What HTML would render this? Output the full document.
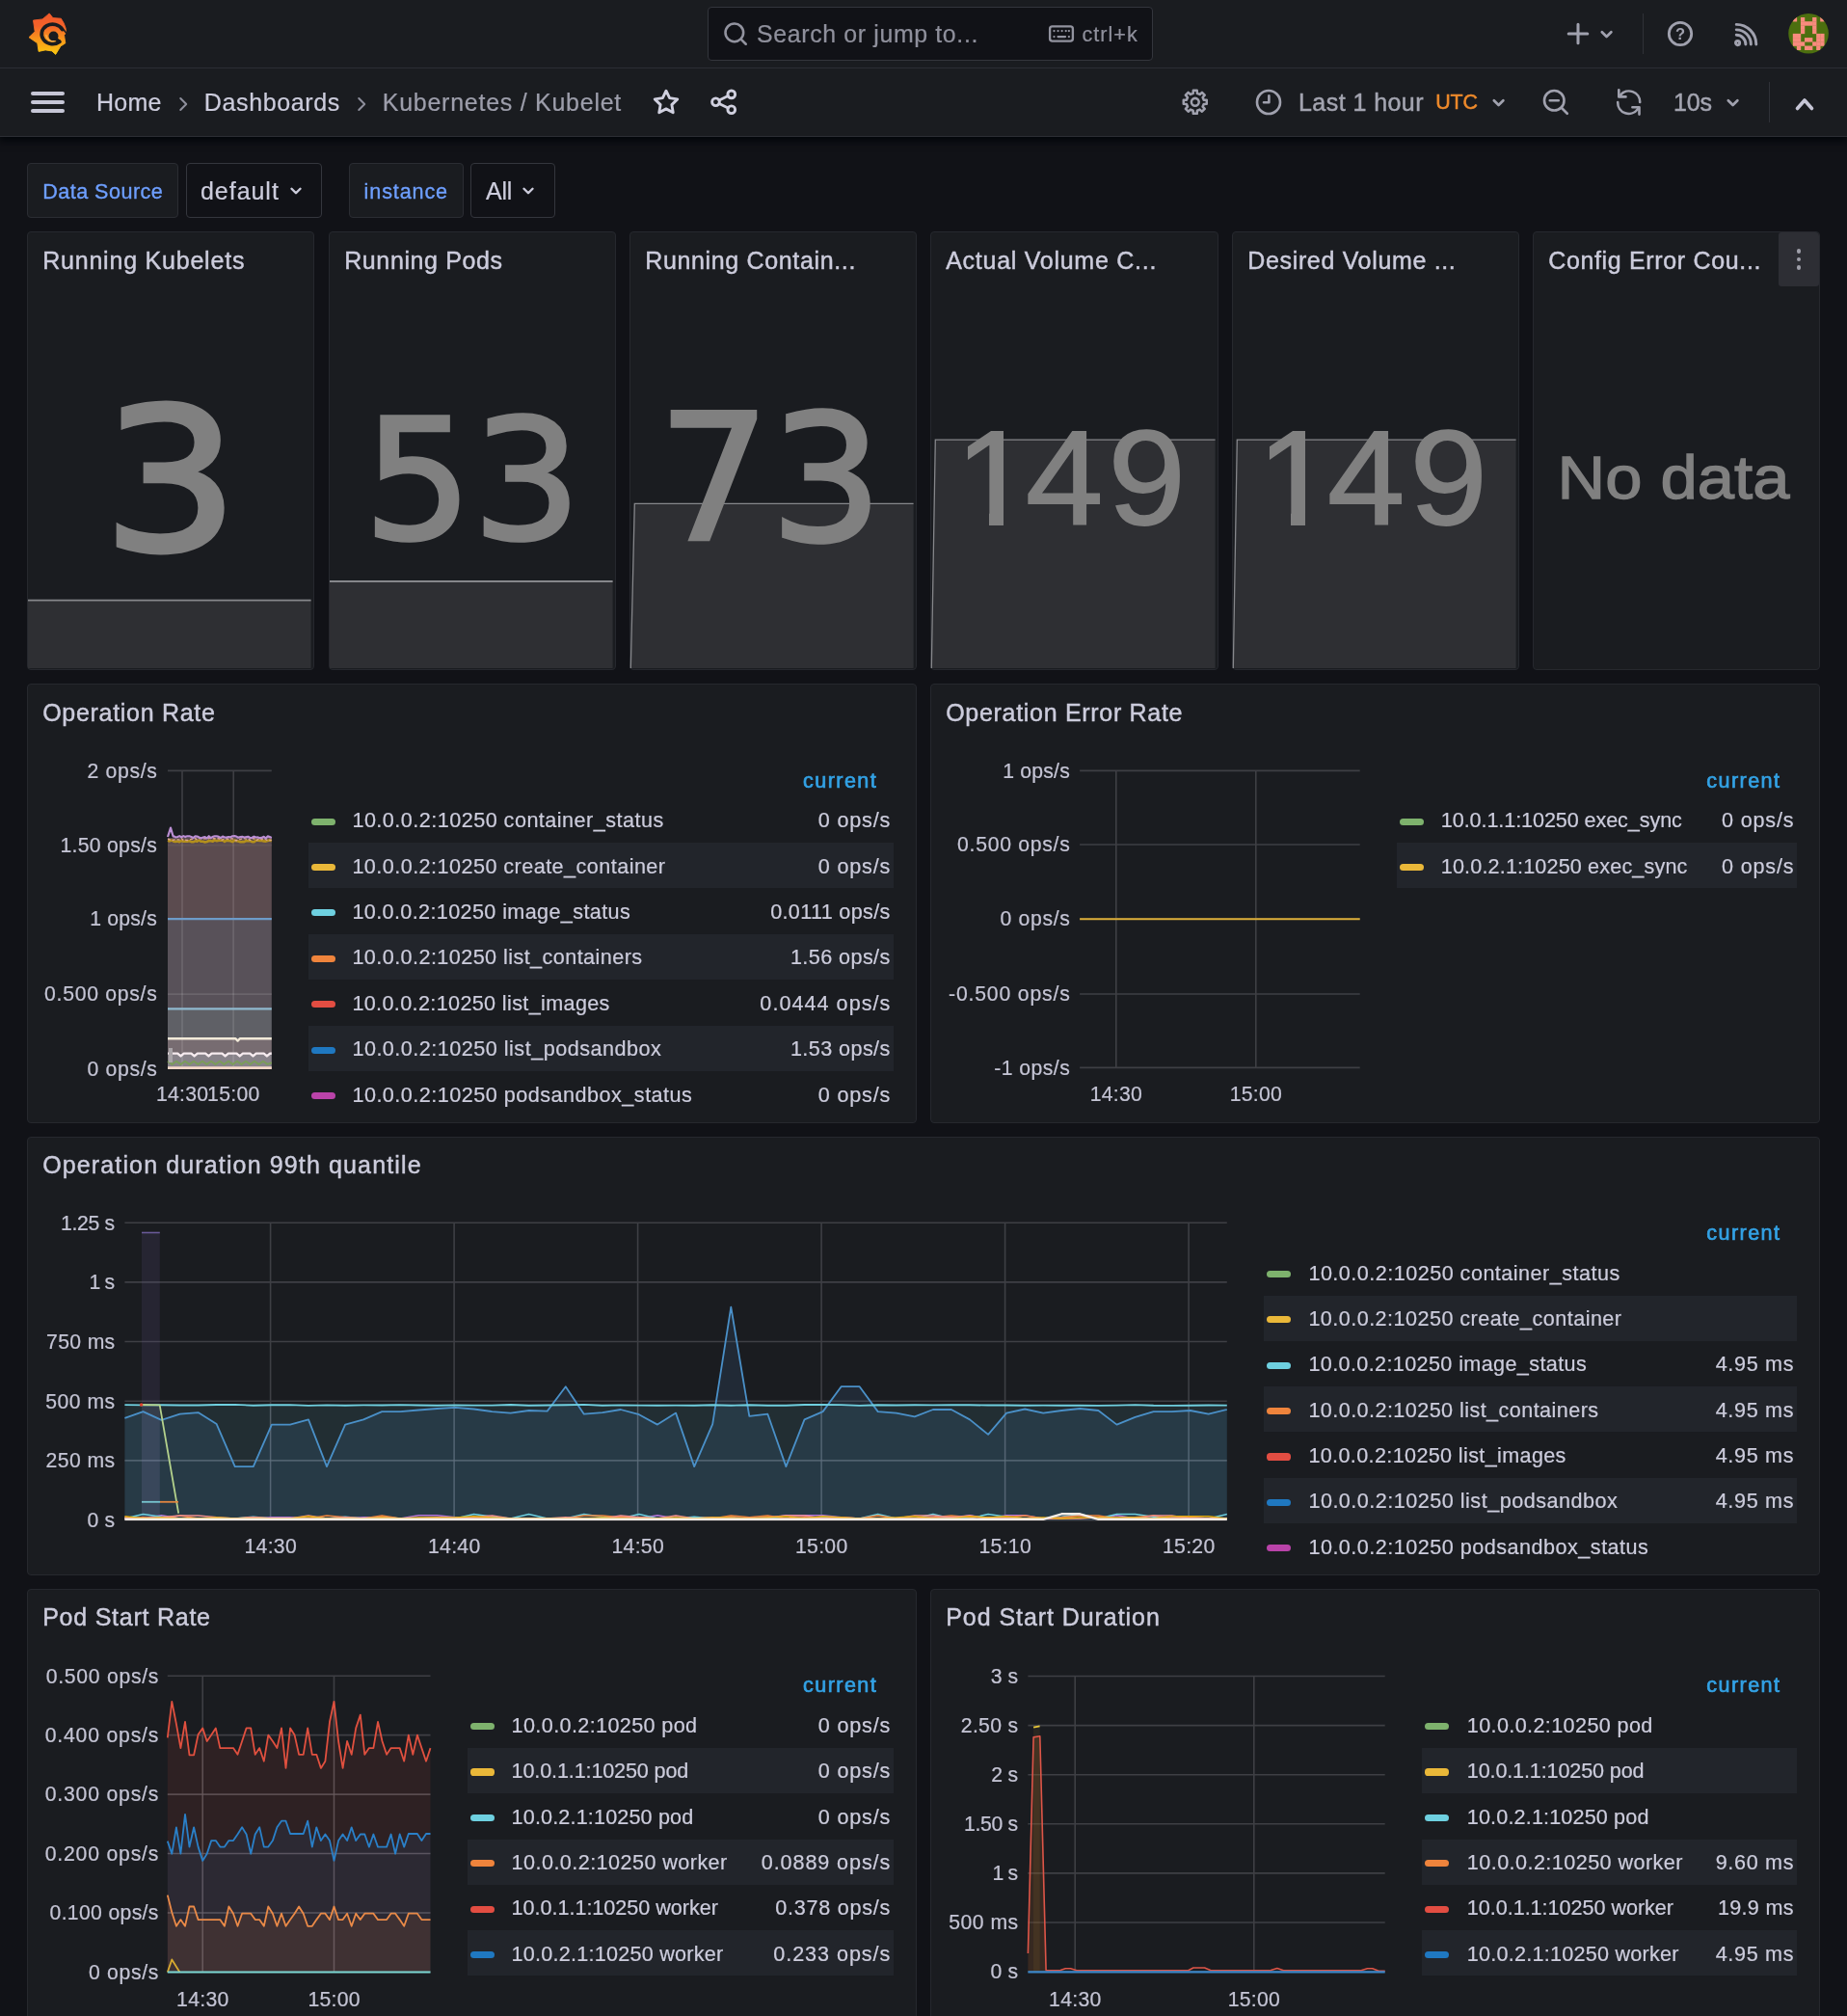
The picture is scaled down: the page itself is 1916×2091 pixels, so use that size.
<!DOCTYPE html>
<html lang="en"><head><meta charset="utf-8"><title>Kubernetes / Kubelet - Dashboards - Grafana</title>
<style>
html,body{margin:0;padding:0;background:#111217;overflow:hidden;}
html{width:1916px;height:2091px;}
body{width:1916px;height:2091px;position:relative;overflow:hidden;font-family:"Liberation Sans", sans-serif;}
#root{position:absolute;left:0;top:0;width:1916px;height:2091px;will-change:transform;overflow:hidden;}
.b{position:absolute;box-sizing:border-box;display:block;}
.t{position:absolute;white-space:pre;line-height:1;font-family:"Liberation Sans", sans-serif;}
svg text{font-family:"Liberation Sans", sans-serif;}
.v149::first-letter{letter-spacing:-7px;}
</style></head>
<body>
<div id="root">
<div class="b" style="left:0.0px;top:0.0px;width:1916.0px;height:142.0px;background:#1a1c20;box-shadow:0 3px 8px 1px rgba(1,4,9,0.92);"></div>
<div class="b" style="left:0.0px;top:70.0px;width:1916.0px;height:1.0px;background:#2c2e34;"></div>
<div class="b" style="left:0.0px;top:141.0px;width:1916.0px;height:1.0px;background:#2c2e34;"></div>
<svg class="b" style="left:20px;top:5px" width="60" height="60" viewBox="20 5 60 60"><defs><linearGradient id="lg" gradientUnits="userSpaceOnUse" x1="0" y1="14" x2="0" y2="57"><stop offset="0" stop-color="#f1592a"/><stop offset="0.3" stop-color="#f3622a"/><stop offset="0.6" stop-color="#f8931c"/><stop offset="1" stop-color="#fbca0f"/></linearGradient></defs><path d="M51.2,13.9 L54.9,18.6 L63.3,19.2 L66.2,24.1 L68.0,28.9 L68.6,33.9 L66.5,36.4 L67.8,44.8 L62.9,47.9 L57.7,56.4 L53.8,52.9 L47.1,51.9 L40.1,53.4 L38.8,44.8 L30.0,38.7 L36.2,32.7 L34.5,21.1 L44.1,19.9Z" fill="url(#lg)" stroke="url(#lg)" stroke-width="0.9" stroke-linejoin="round"/><path d="M64.67,30.56 A11.4,10.3 0 1 0 61.93,43.29" fill="none" stroke="#1a1c20" stroke-width="3.7" stroke-linecap="round"/><path d="M63.07,28.51 Q66.65,31.00 68.66,34.06" fill="none" stroke="#1a1c20" stroke-width="1.7" stroke-linecap="round"/><circle cx="55.5" cy="37.5" r="5.0" fill="#1a1c20"/><path d="M57.8,40.2 L61.2,42.8" stroke="#1a1c20" stroke-width="3.4" stroke-linecap="round"/><path d="M47.9,36.4 A6.9,6.6 0 0 0 56.2,42.6" fill="none" stroke="#f7b35a" stroke-width="1.1" stroke-linecap="round"/></svg>
<div class="b" style="left:734.0px;top:7.0px;width:462.0px;height:56.0px;background:#111217;border:1px solid #33353c;border-radius:4px;"></div>
<svg class="b" style="left:749.0px;top:21.0px" width="28" height="28" viewBox="0 0 24 24" fill="none" stroke="#92939f" stroke-width="2.2" stroke-linecap="round" stroke-linejoin="round"><circle cx="11" cy="11" r="8"/><path d="M17 17l4.2 4.2"/></svg>
<span class="t" id="t1" style="top:23.04px;font-size:24.9px;color:#8f909c;letter-spacing:0.640px;-webkit-text-stroke:0.22px #8f909c;left:785.00px;">Search or jump to...</span>
<svg class="b" style="left:1087.0px;top:21.0px" width="28" height="28" viewBox="0 0 24 24" fill="none" stroke="#92939f" stroke-width="2.0" stroke-linecap="round" stroke-linejoin="round"><rect x="1.8" y="5.5" width="20.4" height="13" rx="2.2"/><path d="M5.5 9.5h.1M9 9.5h.1M12.5 9.5h.1M16 9.5h.1M18.7 9.5h.1M5.5 14.6h.1M18.7 14.6h.1M9 14.6h6.5" stroke-width="1.9"/></svg>
<span class="t" id="t2" style="top:24.84px;font-size:21.6px;color:#8f909c;letter-spacing:1.049px;-webkit-text-stroke:0.22px #8f909c;left:1122.40px;">ctrl+k</span>
<svg class="b" style="left:1622.6px;top:21.2px" width="28" height="28" viewBox="0 0 24 24" fill="none" stroke="#a0a1ae" stroke-width="2.6" stroke-linecap="round" stroke-linejoin="round"><path d="M12 3.6v16.8M3.6 12h16.8"/></svg>
<svg class="b" style="left:1657.4px;top:26.2px" width="19.2" height="19.2" viewBox="-9.6 -9.6 19.2 19.2" fill="none" stroke="#a0a1ae" stroke-width="2.7" stroke-linecap="round" stroke-linejoin="round"><polyline points="-4.8,-2.4 0,2.4 4.8,-2.4"/></svg>
<div class="b" style="left:1704.0px;top:14.0px;width:1.0px;height:42.0px;background:#2f3137;"></div>
<svg class="b" style="left:1729px;top:21px" width="28" height="28" viewBox="0 0 28 28" fill="none" stroke="#a0a1ae" stroke-width="2.8"><circle cx="14" cy="14" r="11.7"/><text x="14" y="19.7" text-anchor="middle" font-size="16.5" font-weight="700" fill="#a0a1ae" stroke="none">?</text></svg>
<svg class="b" style="left:1798.2px;top:22.7px" width="26.2" height="26.2" viewBox="0 0 24 24" fill="none" stroke="#a0a1ae" stroke-width="2.7" stroke-linecap="round" stroke-linejoin="round"><circle cx="4.2" cy="19.8" r="1.9"/><path d="M3 12.2a8.8 8.8 0 0 1 8.8 8.8M3 7.2a13.8 13.8 0 0 1 13.8 13.8M3 2.2a18.8 18.8 0 0 1 18.8 18.8"/></svg>
<svg class="b" style="left:1850px;top:10px" width="54" height="52" viewBox="1850 10 54 52"><defs><clipPath id="av"><circle cx="1876.05" cy="34.7" r="20.8"/></clipPath></defs><g clip-path="url(#av)"><rect x="1850" y="10" width="54" height="52" fill="#4c6f0f"/><g fill="#f98b7e"><rect x="1859.81" y="18.00" width="4.31" height="4.47"/><rect x="1867.93" y="18.00" width="4.31" height="4.47"/><rect x="1880.11" y="18.00" width="4.31" height="4.47"/><rect x="1888.23" y="18.00" width="4.31" height="4.47"/><rect x="1867.93" y="22.22" width="4.31" height="4.47"/><rect x="1871.99" y="22.22" width="4.31" height="4.47"/><rect x="1876.05" y="22.22" width="4.31" height="4.47"/><rect x="1880.11" y="22.22" width="4.31" height="4.47"/><rect x="1867.93" y="26.44" width="4.31" height="4.47"/><rect x="1880.11" y="26.44" width="4.31" height="4.47"/><rect x="1867.93" y="30.66" width="4.31" height="4.47"/><rect x="1880.11" y="30.66" width="4.31" height="4.47"/><rect x="1859.81" y="34.88" width="4.31" height="4.47"/><rect x="1863.87" y="34.88" width="4.31" height="4.47"/><rect x="1884.17" y="34.88" width="4.31" height="4.47"/><rect x="1888.23" y="34.88" width="4.31" height="4.47"/><rect x="1859.81" y="39.10" width="4.31" height="4.47"/><rect x="1863.87" y="39.10" width="4.31" height="4.47"/><rect x="1871.99" y="39.10" width="4.31" height="4.47"/><rect x="1876.05" y="39.10" width="4.31" height="4.47"/><rect x="1884.17" y="39.10" width="4.31" height="4.47"/><rect x="1888.23" y="39.10" width="4.31" height="4.47"/><rect x="1859.81" y="43.32" width="4.31" height="4.47"/><rect x="1863.87" y="43.32" width="4.31" height="4.47"/><rect x="1867.93" y="43.32" width="4.31" height="4.47"/><rect x="1880.11" y="43.32" width="4.31" height="4.47"/><rect x="1884.17" y="43.32" width="4.31" height="4.47"/><rect x="1888.23" y="43.32" width="4.31" height="4.47"/><rect x="1863.87" y="47.54" width="4.31" height="4.47"/><rect x="1871.99" y="47.54" width="4.31" height="4.47"/><rect x="1876.05" y="47.54" width="4.31" height="4.47"/><rect x="1884.17" y="47.54" width="4.31" height="4.47"/></g></g></svg>
<div class="b" style="left:32.0px;top:95.3px;width:35.0px;height:4.0px;background:#c6c6d6;border-radius:2px;"></div>
<div class="b" style="left:32.0px;top:104.0px;width:35.0px;height:4.0px;background:#c6c6d6;border-radius:2px;"></div>
<div class="b" style="left:32.0px;top:112.7px;width:35.0px;height:4.0px;background:#c6c6d6;border-radius:2px;"></div>
<span class="t" id="t3" style="top:93.96px;font-size:25px;color:#ccccdc;letter-spacing:0.228px;-webkit-text-stroke:0.22px #ccccdc;left:100.00px;">Home</span>
<svg class="b" style="left:179.0px;top:96.6px" width="22" height="22" viewBox="0 0 24 24" fill="none" stroke="#8e8f9c" stroke-width="2.2" stroke-linecap="round" stroke-linejoin="round"><path d="M9 5.5l6.5 6.5L9 18.5"/></svg>
<span class="t" id="t4" style="top:93.96px;font-size:25px;color:#ccccdc;letter-spacing:0.629px;-webkit-text-stroke:0.22px #ccccdc;left:211.80px;">Dashboards</span>
<svg class="b" style="left:364.0px;top:96.6px" width="22" height="22" viewBox="0 0 24 24" fill="none" stroke="#8e8f9c" stroke-width="2.2" stroke-linecap="round" stroke-linejoin="round"><path d="M9 5.5l6.5 6.5L9 18.5"/></svg>
<span class="t" id="t5" style="top:93.96px;font-size:25px;color:#9d9eab;letter-spacing:0.735px;-webkit-text-stroke:0.22px #9d9eab;left:396.80px;">Kubernetes / Kubelet</span>
<svg class="b" style="left:676.0px;top:91.0px" width="30" height="30" viewBox="0 0 24 24" fill="none" stroke="#d0d0df" stroke-width="2.3" stroke-linecap="round" stroke-linejoin="round"><path d="M12 2.6l2.9 5.95 6.5.95-4.7 4.6 1.1 6.5L12 17.5l-5.8 3.1 1.1-6.5-4.7-4.6 6.5-.95z"/></svg>
<svg class="b" style="left:736.0px;top:91.0px" width="30" height="30" viewBox="0 0 24 24" fill="none" stroke="#d0d0df" stroke-width="2.3" stroke-linecap="round" stroke-linejoin="round"><circle cx="18.2" cy="5.5" r="3.1"/><circle cx="5.2" cy="11.8" r="3.1"/><circle cx="18.2" cy="18.2" r="3.1"/><path d="M8 10.4l7.4-3.6M8 13.2l7.4 3.6"/></svg>
<svg class="b" style="left:1225.9px;top:92.1px" width="27.6" height="27.6" viewBox="0 0 24 24" fill="none" stroke="#a0a1ae" stroke-width="2.2" stroke-linecap="round" stroke-linejoin="round"><path d="M22.46,10.31 L22.46,13.69 L19.78,13.86 L18.82,16.18 L20.59,18.21 L18.21,20.59 L16.18,18.82 L13.86,19.78 L13.69,22.46 L10.31,22.46 L10.14,19.78 L7.82,18.82 L5.79,20.59 L3.41,18.21 L5.18,16.18 L4.22,13.86 L1.54,13.69 L1.54,10.31 L4.22,10.14 L5.18,7.82 L3.41,5.79 L5.79,3.41 L7.82,5.18 L10.14,4.22 L10.31,1.54 L13.69,1.54 L13.86,4.22 L16.18,5.18 L18.21,3.41 L20.59,5.79 L18.82,7.82 L19.78,10.14Z"/><circle cx="12" cy="12" r="3.4"/></svg>
<svg class="b" style="left:1301.0px;top:91.0px" width="30" height="30" viewBox="0 0 24 24" fill="none" stroke="#a0a1ae" stroke-width="2.1" stroke-linecap="round" stroke-linejoin="round"><circle cx="12" cy="12" r="9.6"/><path d="M12.3 6.6v5.6H8"/></svg>
<span class="t" id="t6" style="top:93.96px;font-size:25px;color:#a4a5b1;letter-spacing:0.446px;-webkit-text-stroke:0.45px #a4a5b1;left:1347.00px;">Last 1 hour</span>
<span class="t" id="t7" style="top:96.00px;font-size:21.4px;color:#ee8a2b;letter-spacing:-0.190px;-webkit-text-stroke:0.5px #ee8a2b;left:1489.30px;">UTC</span>
<svg class="b" style="left:1545.4px;top:97.0px" width="19.2" height="19.2" viewBox="-9.6 -9.6 19.2 19.2" fill="none" stroke="#a0a1ae" stroke-width="2.7" stroke-linecap="round" stroke-linejoin="round"><polyline points="-4.8,-2.4 0,2.4 4.8,-2.4"/></svg>
<svg class="b" style="left:1599.0px;top:91.0px" width="30" height="30" viewBox="0 0 24 24" fill="none" stroke="#a0a1ae" stroke-width="2.1" stroke-linecap="round" stroke-linejoin="round"><circle cx="10.6" cy="10.6" r="8.2"/><path d="M16.6 16.6l4.8 4.8M7 10.6h7.2"/></svg>
<svg class="b" style="left:1670px;top:86px" width="40" height="40" viewBox="1670 86 40 40" fill="none" stroke="#a0a1ae" stroke-width="2.6" stroke-linecap="round" stroke-linejoin="round"><path d="M1679.3,93.2 V100.4 H1686.5"/><path d="M1681.0,98.6 A11.4,11.4 0 0 1 1701.2,105.9"/><path d="M1700.5,118.6 V111.3 H1693.4"/><path d="M1678.2,106.1 A11.4,11.4 0 0 0 1698.8,113.2"/></svg>
<span class="t" id="t8" style="top:93.96px;font-size:25px;color:#a4a5b1;letter-spacing:-0.104px;-webkit-text-stroke:0.45px #a4a5b1;left:1736.00px;">10s</span>
<svg class="b" style="left:1788.4px;top:97.0px" width="19.2" height="19.2" viewBox="-9.6 -9.6 19.2 19.2" fill="none" stroke="#a0a1ae" stroke-width="2.7" stroke-linecap="round" stroke-linejoin="round"><polyline points="-4.8,-2.4 0,2.4 4.8,-2.4"/></svg>
<div class="b" style="left:1835.0px;top:85.0px;width:1.0px;height:42.0px;background:#2f3137;"></div>
<svg class="b" style="left:1858px;top:96px" width="28" height="24" viewBox="0 0 28 24" fill="none" stroke="#c6c6d6" stroke-width="3.6" stroke-linecap="round" stroke-linejoin="round"><polyline points="6.5,16.5 14,8 21.5,16.5"/></svg>
<div class="b" style="left:28.0px;top:169.0px;width:157.0px;height:57.0px;background:#1a1c20;border:1px solid #2b2d33;border-radius:4px;"></div>
<span class="t" id="t9" style="top:187.84px;font-size:21.6px;color:#6e9fff;letter-spacing:0.461px;-webkit-text-stroke:0.35px #6e9fff;left:44.20px;">Data Source</span>
<div class="b" style="left:193.0px;top:169.0px;width:141.0px;height:57.0px;background:#111217;border:1px solid #34363d;border-radius:4px;"></div>
<span class="t" id="t10" style="top:185.96px;font-size:25px;color:#ccccdc;letter-spacing:0.962px;-webkit-text-stroke:0.22px #ccccdc;left:208.00px;">default</span>
<svg class="b" style="left:297.6px;top:188.6px" width="18" height="18" viewBox="-9 -9 18 18" fill="none" stroke="#ccccdc" stroke-width="2.4" stroke-linecap="round" stroke-linejoin="round"><polyline points="-4.5,-2.25 0,2.25 4.5,-2.25"/></svg>
<div class="b" style="left:362.0px;top:169.0px;width:119.0px;height:57.0px;background:#1a1c20;border:1px solid #2b2d33;border-radius:4px;"></div>
<span class="t" id="t11" style="top:187.84px;font-size:21.6px;color:#6e9fff;letter-spacing:0.870px;-webkit-text-stroke:0.35px #6e9fff;left:377.60px;">instance</span>
<div class="b" style="left:488.0px;top:169.0px;width:88.0px;height:57.0px;background:#111217;border:1px solid #34363d;border-radius:4px;"></div>
<span class="t" id="t12" style="top:185.96px;font-size:25px;color:#ccccdc;letter-spacing:-0.266px;-webkit-text-stroke:0.22px #ccccdc;left:504.00px;">All</span>
<svg class="b" style="left:539.3px;top:188.6px" width="18" height="18" viewBox="-9 -9 18 18" fill="none" stroke="#ccccdc" stroke-width="2.4" stroke-linecap="round" stroke-linejoin="round"><polyline points="-4.5,-2.25 0,2.25 4.5,-2.25"/></svg>
<div class="b" style="left:28.0px;top:240.0px;width:298.0px;height:455.0px;background:#1a1c20;border:1px solid #26282e;border-radius:4px;"></div>
<svg class="b" style="left:28.0px;top:240.0px;" width="298" height="455" viewBox="0 0 298 455"><polygon points="1.0,382.6 294.6,382.6 294.6,453.0 1.0,453.0" fill="#2e2f33"/><polyline points="1.0,382.6 294.6,382.6" fill="none" stroke="#86878b" stroke-width="1.9"/></svg>
<span class="t" id="t13" style="top:257.96px;font-size:25px;color:#ccccdc;letter-spacing:0.789px;-webkit-text-stroke:0.45px #ccccdc;left:44.20px;">Running Kubelets</span>
<div class="b" style="left:341.0px;top:240.0px;width:298.0px;height:455.0px;background:#1a1c20;border:1px solid #26282e;border-radius:4px;"></div>
<svg class="b" style="left:341.0px;top:240.0px;" width="298" height="455" viewBox="0 0 298 455"><polygon points="1.0,363.0 294.6,363.0 294.6,453.0 1.0,453.0" fill="#2e2f33"/><polyline points="1.0,363.0 294.6,363.0" fill="none" stroke="#86878b" stroke-width="1.9"/></svg>
<span class="t" id="t14" style="top:257.96px;font-size:25px;color:#ccccdc;letter-spacing:0.611px;-webkit-text-stroke:0.45px #ccccdc;left:357.20px;">Running Pods</span>
<div class="b" style="left:653.0px;top:240.0px;width:298.0px;height:455.0px;background:#1a1c20;border:1px solid #26282e;border-radius:4px;"></div>
<svg class="b" style="left:653.0px;top:240.0px;" width="298" height="455" viewBox="0 0 298 455"><polygon points="1.3,453.0 5.3,282.4 294.6,282.4 294.6,453.0 1.3,453.0" fill="#2e2f33"/><polyline points="1.3,453.0 5.3,282.4 294.6,282.4" fill="none" stroke="#86878b" stroke-width="1.3"/></svg>
<span class="t" id="t15" style="top:257.96px;font-size:25px;color:#ccccdc;letter-spacing:0.656px;-webkit-text-stroke:0.45px #ccccdc;left:669.20px;">Running Contain...</span>
<div class="b" style="left:965.0px;top:240.0px;width:299.0px;height:455.0px;background:#1a1c20;border:1px solid #26282e;border-radius:4px;"></div>
<svg class="b" style="left:965.0px;top:240.0px;" width="299" height="455" viewBox="0 0 299 455"><polygon points="1.3,453.0 5.3,216.2 295.6,216.2 295.6,453.0 1.3,453.0" fill="#2e2f33"/><polyline points="1.3,453.0 5.3,216.2 295.6,216.2" fill="none" stroke="#86878b" stroke-width="1.3"/></svg>
<span class="t" id="t16" style="top:257.96px;font-size:25px;color:#ccccdc;letter-spacing:0.736px;-webkit-text-stroke:0.45px #ccccdc;left:981.20px;">Actual Volume C...</span>
<div class="b" style="left:1278.0px;top:240.0px;width:298.0px;height:455.0px;background:#1a1c20;border:1px solid #26282e;border-radius:4px;"></div>
<svg class="b" style="left:1278.0px;top:240.0px;" width="298" height="455" viewBox="0 0 298 455"><polygon points="1.3,453.0 5.3,216.2 294.6,216.2 294.6,453.0 1.3,453.0" fill="#2e2f33"/><polyline points="1.3,453.0 5.3,216.2 294.6,216.2" fill="none" stroke="#86878b" stroke-width="1.3"/></svg>
<span class="t" id="t17" style="top:257.96px;font-size:25px;color:#ccccdc;letter-spacing:0.669px;-webkit-text-stroke:0.45px #ccccdc;left:1294.20px;">Desired Volume ...</span>
<div class="b" style="left:1590.0px;top:240.0px;width:298.0px;height:455.0px;background:#1a1c20;border:1px solid #26282e;border-radius:4px;"></div>
<span class="t" id="t18" style="top:257.96px;font-size:25px;color:#ccccdc;letter-spacing:0.657px;-webkit-text-stroke:0.45px #ccccdc;left:1606.20px;">Config Error Cou...</span>
<span class="t " id="t19" style="left:176.5px;top:397.0px;font-size:204.5px;color:#808080;transform:translateX(-50%) scaleX(1.085);transform-origin:50% 50%;font-family:'DejaVu Sans','Liberation Sans',sans-serif;-webkit-text-stroke:5.0px #808080;">3</span>
<span class="t " id="t20" style="left:489.5px;top:413.7px;font-size:172.5px;color:#808080;transform:translateX(-50%) scaleX(1.03);transform-origin:50% 50%;font-family:'DejaVu Sans','Liberation Sans',sans-serif;-webkit-text-stroke:3.6px #808080;">53</span>
<span class="t " id="t21" style="left:799.4px;top:406.4px;font-size:182.3px;color:#808080;transform:translateX(-50%) scaleX(1.005);transform-origin:50% 50%;font-family:'DejaVu Sans','Liberation Sans',sans-serif;-webkit-text-stroke:3.6px #808080;">73</span>
<span class="t v149" id="t22" style="left:1112.5px;top:425.8px;font-size:139px;color:#808080;transform:translateX(-50%) scaleX(1.039);transform-origin:50% 50%;-webkit-text-stroke:1.8px #808080;letter-spacing:5px;">149</span>
<span class="t v149" id="t23" style="left:1425.5px;top:425.8px;font-size:139px;color:#808080;transform:translateX(-50%) scaleX(1.039);transform-origin:50% 50%;-webkit-text-stroke:1.8px #808080;letter-spacing:5px;">149</span>
<span class="t " id="t24" style="left:1735.7px;top:464.3px;font-size:63.4px;color:#808080;transform:translateX(-50%) scaleX(1.085);transform-origin:50% 50%;-webkit-text-stroke:1.3px #808080;">No data</span>
<div class="b" style="left:996.0px;top:531.5px;width:30.0px;height:15.5px;background:#2e2f33;"></div>
<div class="b" style="left:1041.2px;top:531.5px;width:27.0px;height:15.5px;background:#2e2f33;"></div>
<div class="b" style="left:1309.0px;top:531.5px;width:30.0px;height:15.5px;background:#2e2f33;"></div>
<div class="b" style="left:1354.2px;top:531.5px;width:27.0px;height:15.5px;background:#2e2f33;"></div>
<div class="b" style="left:1845.3px;top:241.0px;width:41.7px;height:55.8px;background:#2d2e34;border-radius:3px;border-top-right-radius:4px;"></div>
<div class="b" style="left:1863.8px;top:258.3px;width:4.6px;height:4.6px;background:#9d9ea8;border-radius:2.3px;"></div>
<div class="b" style="left:1863.8px;top:266.7px;width:4.6px;height:4.6px;background:#9d9ea8;border-radius:2.3px;"></div>
<div class="b" style="left:1863.8px;top:275.1px;width:4.6px;height:4.6px;background:#9d9ea8;border-radius:2.3px;"></div>
<div class="b" style="left:28.0px;top:709.0px;width:923.0px;height:456.0px;background:#1a1c20;border:1px solid #26282e;border-radius:4px;"></div>
<span class="t" id="t25" style="top:726.96px;font-size:25px;color:#ccccdc;letter-spacing:0.697px;-webkit-text-stroke:0.45px #ccccdc;left:44.20px;">Operation Rate</span>
<span class="t" id="t26" style="top:789.17px;font-size:21.2px;color:#c4c4d4;letter-spacing:0.655px;-webkit-text-stroke:0.22px #c4c4d4;right:1752.54px;">2 ops/s</span>
<span class="t" id="t27" style="top:866.17px;font-size:21.2px;color:#c4c4d4;letter-spacing:0.283px;-webkit-text-stroke:0.22px #c4c4d4;right:1752.92px;">1.50 ops/s</span>
<span class="t" id="t28" style="top:942.17px;font-size:21.2px;color:#c4c4d4;letter-spacing:0.212px;-webkit-text-stroke:0.22px #c4c4d4;right:1752.99px;">1 ops/s</span>
<span class="t" id="t29" style="top:1020.17px;font-size:21.2px;color:#c4c4d4;letter-spacing:0.713px;-webkit-text-stroke:0.22px #c4c4d4;right:1752.49px;">0.500 ops/s</span>
<span class="t" id="t30" style="top:1098.17px;font-size:21.2px;color:#c4c4d4;letter-spacing:0.670px;-webkit-text-stroke:0.22px #c4c4d4;right:1752.53px;">0 ops/s</span>
<span class="t" id="t31" style="top:1124.17px;font-size:21.2px;color:#c4c4d4;letter-spacing:0.294px;-webkit-text-stroke:0.22px #c4c4d4;left:189.15px;transform:translateX(-50%);">14:30</span>
<span class="t" id="t32" style="top:1124.17px;font-size:21.2px;color:#c4c4d4;letter-spacing:0.294px;-webkit-text-stroke:0.22px #c4c4d4;left:242.35px;transform:translateX(-50%);">15:00</span>
<svg class="b" style="left:0;top:0" width="1916" height="2091" viewBox="0 0 1916 2091" fill="none" stroke-linejoin="round"><g stroke="#3e3f44" stroke-width="1.6" fill="none"><line x1="174.0" x2="281.8" y1="799.4" y2="799.4"/><line x1="174.0" x2="281.8" y1="876.6" y2="876.6"/><line x1="174.0" x2="281.8" y1="953.0" y2="953.0"/><line x1="174.0" x2="281.8" y1="1031.0" y2="1031.0"/><line x1="174.0" x2="281.8" y1="1108.2" y2="1108.2"/><line x1="189.0" x2="189.0" y1="799.4" y2="1108.2"/><line x1="242.2" x2="242.2" y1="799.4" y2="1108.2"/></g><rect x="174.0" y="869" width="107.80000000000001" height="84" fill="#5b4b4f"/><rect x="174.0" y="953" width="107.80000000000001" height="93.29999999999995" fill="#585159"/><rect x="174.0" y="1046.3" width="107.80000000000001" height="30.90000000000009" fill="#5f6066"/><rect x="174.0" y="1077.2" width="107.80000000000001" height="15.5" fill="#776c71"/><rect x="174.0" y="1092.7" width="107.80000000000001" height="15.799999999999955" fill="#88838a"/><g stroke="#ffffff" stroke-opacity="0.11" stroke-width="1.8"><line x1="189" x2="189" y1="870" y2="1106"/><line x1="242.1" x2="242.1" y1="870" y2="1106"/><line x1="174.0" x2="281.8" y1="1031.2" y2="1031.2"/><line x1="174.0" x2="281.8" y1="876.6" y2="876.6" stroke-opacity="0.05"/></g><polyline points="174.0,871.7 176.0,872.4 178.1,871.5 180.1,872.7 182.1,872.9 184.2,872.5 186.2,873.2 188.2,872.0 190.3,872.8 192.3,872.6 194.3,872.6 196.4,872.3 198.4,873.1 200.4,873.3 202.5,872.3 204.5,872.7 206.5,871.5 208.6,872.8 210.6,872.7 212.6,873.4 214.7,873.0 216.7,872.0 218.7,872.2 220.8,872.7 222.8,871.4 224.8,872.3 226.9,871.7 228.9,871.6 231.0,871.5 233.0,872.9 235.0,871.7 237.1,871.9 239.1,872.2 241.1,873.1 243.2,871.6 245.2,872.3 247.2,872.5 249.3,873.2 251.3,873.0 253.3,873.1 255.4,872.0 257.4,872.2 259.4,872.1 261.5,873.2 263.5,873.3 265.5,871.7 267.6,871.8 269.6,871.9 271.6,871.9 273.7,872.4 275.7,872.6 277.7,871.9 279.8,871.4 281.8,872.2" stroke="#b4901c" stroke-width="2.6"/><polyline points="174.0,870.3 176.0,870.8 178.1,871.7 180.1,871.1 182.1,870.6 184.2,870.9 186.2,871.0 188.2,869.5 190.3,871.6 192.3,871.3 194.3,871.5 196.4,871.3 198.4,870.3 200.4,870.4 202.5,869.6 204.5,870.9 206.5,869.5 208.6,869.6 210.6,869.9 212.6,869.8 214.7,870.2 216.7,869.5 218.7,869.4 220.8,869.8 222.8,869.6 224.8,870.3 226.9,869.5 228.9,871.5 231.0,870.9 233.0,869.8 235.0,870.0 237.1,870.2 239.1,870.3 241.1,869.7 243.2,871.4 245.2,871.8 247.2,870.5 249.3,870.6 251.3,869.6 253.3,869.6 255.4,870.2 257.4,870.0 259.4,871.4 261.5,869.8 263.5,869.5 265.5,871.7 267.6,870.7 269.6,869.8 271.6,870.7 273.7,869.5 275.7,870.7 277.7,871.7 279.8,871.5 281.8,871.1" stroke="#d9a38c" stroke-width="1.4" stroke-dasharray="3 2"/><polyline points="174.0,868.0 177.0,858.6 179.6,867.5 180.1,867.3 182.1,868.4 184.2,868.0 186.2,867.2 188.2,868.3 190.3,867.2 192.3,868.1 194.3,867.3 196.4,867.3 198.4,868.1 200.4,869.1 202.5,867.4 204.5,867.6 206.5,868.6 208.6,869.4 210.6,868.5 212.6,868.1 214.7,869.4 216.7,867.2 218.7,869.2 220.8,867.8 222.8,867.4 224.8,867.4 226.9,867.8 228.9,869.1 231.0,867.5 233.0,868.5 235.0,868.6 237.1,868.0 239.1,868.4 241.1,867.3 243.2,867.2 245.2,867.6 247.2,868.7 249.3,868.1 251.3,867.9 253.3,868.5 255.4,868.2 257.4,867.8 259.4,869.0 261.5,868.8 263.5,867.7 265.5,868.5 267.6,868.4 269.6,869.2 271.6,868.9 273.7,867.8 275.7,869.5 277.7,867.4 279.8,868.1 281.8,868.9" stroke="#bb8fd4" stroke-width="2.2"/><line x1="174.0" x2="281.8" y1="953.1" y2="953.1" stroke="#6d9bc9" stroke-width="2.3"/><line x1="174.0" x2="281.8" y1="1046.3" y2="1046.3" stroke="#8fb9cf" stroke-width="2.2"/><polyline points="174.0,1077.2 244.4,1077.2 246.6,1079.6 248.8,1077.2 281.8,1077.2" stroke="#f1ead9" stroke-width="2.4"/><polyline points="174.0,1092.6 184.3,1092.6 187.5,1095.4 190.7,1092.6 198.4,1092.6 201.6,1095.4 204.8,1092.6 213.2,1092.6 216.4,1095.4 219.6,1092.6 230.4,1092.6 233.6,1095.4 236.8,1092.6 245.5,1092.6 248.7,1095.4 251.9,1092.6 259.3,1092.6 262.5,1095.4 265.7,1092.6 273.7,1092.6 276.9,1095.4 280.1,1092.6 281.8,1092.8" stroke="#f6ebef" stroke-width="2.4"/><polyline points="174.0,1100.7 178.5,1103.9 183.0,1100.7 187.5,1103.9 192.0,1100.7 196.5,1103.9 201.0,1100.7 205.5,1103.9 210.0,1100.7 214.5,1103.9 219.0,1100.7 223.5,1103.9 228.0,1100.7 232.5,1103.9 237.0,1100.7 241.5,1103.9 246.0,1100.7 250.5,1103.9 255.0,1100.7 259.5,1103.9 264.0,1100.7 268.5,1103.9 273.0,1100.7 277.5,1103.9 281.8,1102.3" stroke="#7b9c5a" stroke-width="2"/><rect x="175.0" y="1087" width="4" height="15" fill="#a9a4a8"/><line x1="174.0" x2="281.8" y1="1107.6" y2="1107.6" stroke="#f6d8c8" stroke-width="2.6"/></svg>
<span class="t" id="t33" style="top:798.84px;font-size:21.6px;color:#33a2e5;letter-spacing:1.426px;-webkit-text-stroke:0.7px #33a2e5;right:1005.77px;">current</span>
<div class="b" style="left:322.9px;top:848.5px;width:25.0px;height:7.2px;background:#7EB26D;border-radius:3.6px;"></div>
<span class="t" id="t34" style="top:839.84px;font-size:21.6px;color:#ccccdc;letter-spacing:0.476px;-webkit-text-stroke:0.22px #ccccdc;left:365.40px;">10.0.0.2:10250 container_status</span>
<span class="t" id="t35" style="top:839.84px;font-size:21.6px;color:#ccccdc;letter-spacing:0.811px;-webkit-text-stroke:0.22px #ccccdc;right:991.89px;">0 ops/s</span>
<div class="b" style="left:319.8px;top:874.2px;width:607.1px;height:47.2px;background:#22252b;"></div>
<div class="b" style="left:322.9px;top:895.9px;width:25.0px;height:7.2px;background:#EAB839;border-radius:3.6px;"></div>
<span class="t" id="t36" style="top:887.84px;font-size:21.6px;color:#ccccdc;letter-spacing:0.456px;-webkit-text-stroke:0.22px #ccccdc;left:365.40px;">10.0.0.2:10250 create_container</span>
<span class="t" id="t37" style="top:887.84px;font-size:21.6px;color:#ccccdc;letter-spacing:0.811px;-webkit-text-stroke:0.22px #ccccdc;right:991.89px;">0 ops/s</span>
<div class="b" style="left:322.9px;top:943.3px;width:25.0px;height:7.2px;background:#6ED0E0;border-radius:3.6px;"></div>
<span class="t" id="t38" style="top:934.84px;font-size:21.6px;color:#ccccdc;letter-spacing:0.377px;-webkit-text-stroke:0.22px #ccccdc;left:365.40px;">10.0.0.2:10250 image_status</span>
<span class="t" id="t39" style="top:934.84px;font-size:21.6px;color:#ccccdc;letter-spacing:0.337px;-webkit-text-stroke:0.22px #ccccdc;right:992.36px;">0.0111 ops/s</span>
<div class="b" style="left:319.8px;top:969.0px;width:607.1px;height:47.2px;background:#22252b;"></div>
<div class="b" style="left:322.9px;top:990.7px;width:25.0px;height:7.2px;background:#EF843C;border-radius:3.6px;"></div>
<span class="t" id="t40" style="top:981.84px;font-size:21.6px;color:#ccccdc;letter-spacing:0.433px;-webkit-text-stroke:0.22px #ccccdc;left:365.40px;">10.0.0.2:10250 list_containers</span>
<span class="t" id="t41" style="top:981.84px;font-size:21.6px;color:#ccccdc;letter-spacing:0.416px;-webkit-text-stroke:0.22px #ccccdc;right:992.28px;">1.56 ops/s</span>
<div class="b" style="left:322.9px;top:1038.1px;width:25.0px;height:7.2px;background:#E24D42;border-radius:3.6px;"></div>
<span class="t" id="t42" style="top:1029.84px;font-size:21.6px;color:#ccccdc;letter-spacing:0.357px;-webkit-text-stroke:0.22px #ccccdc;left:365.40px;">10.0.0.2:10250 list_images</span>
<span class="t" id="t43" style="top:1029.84px;font-size:21.6px;color:#ccccdc;letter-spacing:1.027px;-webkit-text-stroke:0.22px #ccccdc;right:991.67px;">0.0444 ops/s</span>
<div class="b" style="left:319.8px;top:1063.8px;width:607.1px;height:47.2px;background:#22252b;"></div>
<div class="b" style="left:322.9px;top:1085.5px;width:25.0px;height:7.2px;background:#1F78C1;border-radius:3.6px;"></div>
<span class="t" id="t44" style="top:1076.84px;font-size:21.6px;color:#ccccdc;letter-spacing:0.488px;-webkit-text-stroke:0.22px #ccccdc;left:365.40px;">10.0.0.2:10250 list_podsandbox</span>
<span class="t" id="t45" style="top:1076.84px;font-size:21.6px;color:#ccccdc;letter-spacing:0.416px;-webkit-text-stroke:0.22px #ccccdc;right:992.28px;">1.53 ops/s</span>
<div class="b" style="left:322.9px;top:1132.9px;width:25.0px;height:7.2px;background:#BA43A9;border-radius:3.6px;"></div>
<span class="t" id="t46" style="top:1124.84px;font-size:21.6px;color:#ccccdc;letter-spacing:0.488px;-webkit-text-stroke:0.22px #ccccdc;left:365.40px;">10.0.0.2:10250 podsandbox_status</span>
<span class="t" id="t47" style="top:1124.84px;font-size:21.6px;color:#ccccdc;letter-spacing:0.811px;-webkit-text-stroke:0.22px #ccccdc;right:991.89px;">0 ops/s</span>
<div class="b" style="left:965.0px;top:709.0px;width:923.0px;height:456.0px;background:#1a1c20;border:1px solid #26282e;border-radius:4px;"></div>
<span class="t" id="t48" style="top:726.96px;font-size:25px;color:#ccccdc;letter-spacing:0.698px;-webkit-text-stroke:0.45px #ccccdc;left:981.20px;">Operation Error Rate</span>
<span class="t" id="t49" style="top:789.17px;font-size:21.2px;color:#c4c4d4;letter-spacing:0.212px;-webkit-text-stroke:0.22px #c4c4d4;right:805.99px;">1 ops/s</span>
<span class="t" id="t50" style="top:865.17px;font-size:21.2px;color:#c4c4d4;letter-spacing:0.713px;-webkit-text-stroke:0.22px #c4c4d4;right:805.49px;">0.500 ops/s</span>
<span class="t" id="t51" style="top:942.17px;font-size:21.2px;color:#c4c4d4;letter-spacing:0.670px;-webkit-text-stroke:0.22px #c4c4d4;right:805.53px;">0 ops/s</span>
<span class="t" id="t52" style="top:1020.17px;font-size:21.2px;color:#c4c4d4;letter-spacing:0.833px;-webkit-text-stroke:0.22px #c4c4d4;right:805.37px;">-0.500 ops/s</span>
<span class="t" id="t53" style="top:1097.17px;font-size:21.2px;color:#c4c4d4;letter-spacing:0.453px;-webkit-text-stroke:0.22px #c4c4d4;right:805.75px;">-1 ops/s</span>
<span class="t" id="t54" style="top:1124.17px;font-size:21.2px;color:#c4c4d4;letter-spacing:0.294px;-webkit-text-stroke:0.22px #c4c4d4;left:1157.95px;transform:translateX(-50%);">14:30</span>
<span class="t" id="t55" style="top:1124.17px;font-size:21.2px;color:#c4c4d4;letter-spacing:0.294px;-webkit-text-stroke:0.22px #c4c4d4;left:1302.95px;transform:translateX(-50%);">15:00</span>
<svg class="b" style="left:0;top:0" width="1916" height="2091" viewBox="0 0 1916 2091" fill="none" stroke-linejoin="round"><g stroke="#3e3f44" stroke-width="1.6" fill="none"><line x1="1120.1" x2="1410.7" y1="799.4" y2="799.4"/><line x1="1120.1" x2="1410.7" y1="876.0" y2="876.0"/><line x1="1120.1" x2="1410.7" y1="953.2" y2="953.2"/><line x1="1120.1" x2="1410.7" y1="1031.0" y2="1031.0"/><line x1="1120.1" x2="1410.7" y1="1107.4" y2="1107.4"/><line x1="1157.8" x2="1157.8" y1="799.4" y2="1107.4"/><line x1="1302.8" x2="1302.8" y1="799.4" y2="1107.4"/></g><line x1="1120.1" x2="1410.7" y1="953.2" y2="953.2" stroke="#dcae38" stroke-width="2"/></svg>
<span class="t" id="t56" style="top:798.84px;font-size:21.6px;color:#33a2e5;letter-spacing:1.426px;-webkit-text-stroke:0.7px #33a2e5;right:68.57px;">current</span>
<div class="b" style="left:1452.0px;top:848.5px;width:25.0px;height:7.2px;background:#7EB26D;border-radius:3.6px;"></div>
<span class="t" id="t57" style="top:839.84px;font-size:21.6px;color:#ccccdc;letter-spacing:-0.089px;-webkit-text-stroke:0.22px #ccccdc;left:1494.80px;">10.0.1.1:10250 exec_sync</span>
<span class="t" id="t58" style="top:839.84px;font-size:21.6px;color:#ccccdc;letter-spacing:0.811px;-webkit-text-stroke:0.22px #ccccdc;right:54.69px;">0 ops/s</span>
<div class="b" style="left:1449.3px;top:874.2px;width:414.8px;height:47.2px;background:#22252b;"></div>
<div class="b" style="left:1452.0px;top:895.9px;width:25.0px;height:7.2px;background:#EAB839;border-radius:3.6px;"></div>
<span class="t" id="t59" style="top:887.84px;font-size:21.6px;color:#ccccdc;letter-spacing:0.149px;-webkit-text-stroke:0.22px #ccccdc;left:1494.80px;">10.0.2.1:10250 exec_sync</span>
<span class="t" id="t60" style="top:887.84px;font-size:21.6px;color:#ccccdc;letter-spacing:0.811px;-webkit-text-stroke:0.22px #ccccdc;right:54.69px;">0 ops/s</span>
<div class="b" style="left:28.0px;top:1179.0px;width:1860.0px;height:455.0px;background:#1a1c20;border:1px solid #26282e;border-radius:4px;"></div>
<span class="t" id="t61" style="top:1195.96px;font-size:25px;color:#ccccdc;letter-spacing:1.134px;-webkit-text-stroke:0.45px #ccccdc;left:44.20px;">Operation duration 99th quantile</span>
<span class="t" id="t62" style="top:1258.17px;font-size:21.2px;color:#c4c4d4;letter-spacing:-0.303px;-webkit-text-stroke:0.22px #c4c4d4;right:1797.10px;">1.25 s</span>
<span class="t" id="t63" style="top:1319.17px;font-size:21.2px;color:#c4c4d4;letter-spacing:-0.755px;-webkit-text-stroke:0.22px #c4c4d4;right:1797.56px;">1 s</span>
<span class="t" id="t64" style="top:1381.17px;font-size:21.2px;color:#c4c4d4;letter-spacing:0.336px;-webkit-text-stroke:0.22px #c4c4d4;right:1796.46px;">750 ms</span>
<span class="t" id="t65" style="top:1443.17px;font-size:21.2px;color:#c4c4d4;letter-spacing:0.519px;-webkit-text-stroke:0.22px #c4c4d4;right:1796.28px;">500 ms</span>
<span class="t" id="t66" style="top:1504.17px;font-size:21.2px;color:#c4c4d4;letter-spacing:0.453px;-webkit-text-stroke:0.22px #c4c4d4;right:1796.35px;">250 ms</span>
<span class="t" id="t67" style="top:1566.17px;font-size:21.2px;color:#c4c4d4;letter-spacing:0.278px;-webkit-text-stroke:0.22px #c4c4d4;right:1796.52px;">0 s</span>
<span class="t" id="t68" style="top:1593.17px;font-size:21.2px;color:#c4c4d4;letter-spacing:0.294px;-webkit-text-stroke:0.22px #c4c4d4;left:280.75px;transform:translateX(-50%);">14:30</span>
<span class="t" id="t69" style="top:1593.17px;font-size:21.2px;color:#c4c4d4;letter-spacing:0.294px;-webkit-text-stroke:0.22px #c4c4d4;left:471.25px;transform:translateX(-50%);">14:40</span>
<span class="t" id="t70" style="top:1593.17px;font-size:21.2px;color:#c4c4d4;letter-spacing:0.294px;-webkit-text-stroke:0.22px #c4c4d4;left:661.75px;transform:translateX(-50%);">14:50</span>
<span class="t" id="t71" style="top:1593.17px;font-size:21.2px;color:#c4c4d4;letter-spacing:0.294px;-webkit-text-stroke:0.22px #c4c4d4;left:852.25px;transform:translateX(-50%);">15:00</span>
<span class="t" id="t72" style="top:1593.17px;font-size:21.2px;color:#c4c4d4;letter-spacing:0.294px;-webkit-text-stroke:0.22px #c4c4d4;left:1042.75px;transform:translateX(-50%);">15:10</span>
<span class="t" id="t73" style="top:1593.17px;font-size:21.2px;color:#c4c4d4;letter-spacing:0.294px;-webkit-text-stroke:0.22px #c4c4d4;left:1233.25px;transform:translateX(-50%);">15:20</span>
<svg class="b" style="left:0;top:0" width="1916" height="2091" viewBox="0 0 1916 2091" fill="none" stroke-linejoin="round"><g stroke="#3e3f44" stroke-width="1.6" fill="none"><line x1="129.4" x2="1272.8" y1="1268.2" y2="1268.2"/><line x1="129.4" x2="1272.8" y1="1329.88" y2="1329.88"/><line x1="129.4" x2="1272.8" y1="1391.56" y2="1391.56"/><line x1="129.4" x2="1272.8" y1="1453.24" y2="1453.24"/><line x1="129.4" x2="1272.8" y1="1514.92" y2="1514.92"/><line x1="129.4" x2="1272.8" y1="1576.6" y2="1576.6"/><line x1="280.6" x2="280.6" y1="1268.2" y2="1576.6"/><line x1="471.1" x2="471.1" y1="1268.2" y2="1576.6"/><line x1="661.6" x2="661.6" y1="1268.2" y2="1576.6"/><line x1="852.1" x2="852.1" y1="1268.2" y2="1576.6"/><line x1="1042.6" x2="1042.6" y1="1268.2" y2="1576.6"/><line x1="1233.1" x2="1233.1" y1="1268.2" y2="1576.6"/></g><polygon points="129.4,1457.1 148.5,1457.4 167.5,1457.3 186.6,1457.5 205.6,1457.5 224.7,1457.0 243.7,1456.9 262.8,1457.7 281.9,1457.2 300.9,1457.1 320.0,1457.9 339.0,1457.4 358.1,1457.7 377.1,1457.4 396.2,1457.5 415.2,1457.1 434.3,1457.5 453.4,1457.8 472.4,1457.4 491.5,1457.6 510.5,1457.6 529.6,1457.0 548.6,1457.7 567.7,1457.5 586.8,1457.2 605.8,1456.9 624.9,1457.8 643.9,1457.4 663.0,1457.6 682.0,1457.8 701.1,1457.6 720.2,1457.8 739.2,1457.3 758.3,1457.7 777.3,1457.3 796.4,1457.8 815.4,1457.8 834.5,1457.0 853.6,1457.0 872.6,1457.1 891.7,1457.9 910.7,1457.3 929.8,1457.5 948.8,1457.2 967.9,1457.4 986.9,1457.3 1006.0,1457.3 1025.1,1457.5 1044.1,1457.5 1063.2,1457.8 1082.2,1457.6 1101.3,1457.8 1120.3,1457.8 1139.4,1457.9 1158.5,1457.6 1177.5,1457.1 1196.6,1457.8 1215.6,1457.9 1234.7,1457.8 1253.7,1457.5 1272.8,1457.6 1272.8,1576.6 129.4,1576.6" fill="#6ED0E0" fill-opacity="0.10"/><polygon points="129.4,1470.8 148.5,1464.1 167.5,1472.9 186.6,1466.7 205.6,1465.1 224.7,1477.1 243.7,1521.1 262.8,1521.1 281.9,1477.6 300.9,1477.6 320.0,1472.4 339.0,1521.1 358.1,1477.6 377.1,1472.4 396.2,1464.1 415.2,1464.1 434.3,1462.5 453.4,1461.0 472.4,1459.9 491.5,1461.5 510.5,1464.1 529.6,1465.6 548.6,1463.0 567.7,1463.6 586.8,1438.2 605.8,1466.7 624.9,1465.1 643.9,1462.0 663.0,1467.2 682.0,1477.6 701.1,1465.6 720.2,1521.1 739.2,1477.1 758.3,1355.7 777.3,1468.8 796.4,1466.7 815.4,1521.1 834.5,1472.4 853.6,1464.1 872.6,1438.2 891.7,1438.2 910.7,1464.1 929.8,1465.6 948.8,1469.3 967.9,1462.0 986.9,1462.0 1006.0,1472.4 1025.1,1487.9 1044.1,1465.6 1063.2,1461.5 1082.2,1465.6 1101.3,1463.0 1120.3,1461.0 1139.4,1463.0 1158.5,1477.6 1177.5,1469.8 1196.6,1464.1 1215.6,1464.1 1234.7,1463.0 1253.7,1466.7 1272.8,1462.0 1272.8,1576.6 129.4,1576.6" fill="#487eb7" fill-opacity="0.15"/><rect x="147" y="1278.5" width="18.8" height="298.0999999999999" fill="#705DA0" fill-opacity="0.14"/><rect x="147" y="1457.4" width="18.8" height="119.19999999999982" fill="#9fb4c4" fill-opacity="0.08"/><line x1="147" x2="165.8" y1="1278.5" y2="1278.5" stroke="#6a5a98" stroke-width="1.6"/><g stroke="#c8d4e0" stroke-opacity="0.13" stroke-width="1.4"><line x1="280.6" x2="280.6" y1="1458" y2="1576.6"/><line x1="471.1" x2="471.1" y1="1458" y2="1576.6"/><line x1="661.6" x2="661.6" y1="1458" y2="1576.6"/><line x1="852.1" x2="852.1" y1="1458" y2="1576.6"/><line x1="1042.6" x2="1042.6" y1="1458" y2="1576.6"/><line x1="1233.1" x2="1233.1" y1="1458" y2="1576.6"/><line x1="129.4" x2="1272.8" y1="1514.92" y2="1514.92"/></g><polyline points="129.4,1470.8 148.5,1464.1 167.5,1472.9 186.6,1466.7 205.6,1465.1 224.7,1477.1 243.7,1521.1 262.8,1521.1 281.9,1477.6 300.9,1477.6 320.0,1472.4 339.0,1521.1 358.1,1477.6 377.1,1472.4 396.2,1464.1 415.2,1464.1 434.3,1462.5 453.4,1461.0 472.4,1459.9 491.5,1461.5 510.5,1464.1 529.6,1465.6 548.6,1463.0 567.7,1463.6 586.8,1438.2 605.8,1466.7 624.9,1465.1 643.9,1462.0 663.0,1467.2 682.0,1477.6 701.1,1465.6 720.2,1521.1 739.2,1477.1 758.3,1355.7 777.3,1468.8 796.4,1466.7 815.4,1521.1 834.5,1472.4 853.6,1464.1 872.6,1438.2 891.7,1438.2 910.7,1464.1 929.8,1465.6 948.8,1469.3 967.9,1462.0 986.9,1462.0 1006.0,1472.4 1025.1,1487.9 1044.1,1465.6 1063.2,1461.5 1082.2,1465.6 1101.3,1463.0 1120.3,1461.0 1139.4,1463.0 1158.5,1477.6 1177.5,1469.8 1196.6,1464.1 1215.6,1464.1 1234.7,1463.0 1253.7,1466.7 1272.8,1462.0" stroke="#4a90c8" stroke-width="1.8"/><polyline points="129.4,1457.1 148.5,1457.4 167.5,1457.3 186.6,1457.5 205.6,1457.5 224.7,1457.0 243.7,1456.9 262.8,1457.7 281.9,1457.2 300.9,1457.1 320.0,1457.9 339.0,1457.4 358.1,1457.7 377.1,1457.4 396.2,1457.5 415.2,1457.1 434.3,1457.5 453.4,1457.8 472.4,1457.4 491.5,1457.6 510.5,1457.6 529.6,1457.0 548.6,1457.7 567.7,1457.5 586.8,1457.2 605.8,1456.9 624.9,1457.8 643.9,1457.4 663.0,1457.6 682.0,1457.8 701.1,1457.6 720.2,1457.8 739.2,1457.3 758.3,1457.7 777.3,1457.3 796.4,1457.8 815.4,1457.8 834.5,1457.0 853.6,1457.0 872.6,1457.1 891.7,1457.9 910.7,1457.3 929.8,1457.5 948.8,1457.2 967.9,1457.4 986.9,1457.3 1006.0,1457.3 1025.1,1457.5 1044.1,1457.5 1063.2,1457.8 1082.2,1457.6 1101.3,1457.8 1120.3,1457.8 1139.4,1457.9 1158.5,1457.6 1177.5,1457.1 1196.6,1457.8 1215.6,1457.9 1234.7,1457.8 1253.7,1457.5 1272.8,1457.6" stroke="#6fcfdf" stroke-width="1.9"/><polyline points="146.5,1457 165.7,1457.4 185.2,1569.6" stroke="#b4d28c" stroke-width="1.8"/><circle cx="146.6" cy="1457" r="1.8" fill="#e0452f"/><line x1="147" x2="166" y1="1557.8" y2="1557.8" stroke="#77c4cf" stroke-width="1.8"/><line x1="166" x2="185" y1="1557.8" y2="1557.8" stroke="#e0853f" stroke-width="1.8"/><polyline points="129.4,1575.0 148.5,1575.0 167.5,1571.8 186.6,1575.0 205.6,1575.0 224.7,1575.0 243.7,1575.0 262.8,1575.0 281.9,1573.7 300.9,1573.7 320.0,1575.0 339.0,1575.0 358.1,1575.0 377.1,1573.7 396.2,1573.7 415.2,1575.0 434.3,1571.8 453.4,1571.8 472.4,1573.7 491.5,1573.7 510.5,1575.0 529.6,1575.0 548.6,1575.0 567.7,1575.0 586.8,1575.0 605.8,1575.0 624.9,1575.0 643.9,1575.0 663.0,1575.0 682.0,1571.8 701.1,1575.0 720.2,1573.7 739.2,1575.0 758.3,1573.7 777.3,1575.0 796.4,1575.0 815.4,1571.8 834.5,1571.8 853.6,1571.8 872.6,1573.7 891.7,1575.0 910.7,1575.0 929.8,1575.0 948.8,1575.0 967.9,1573.7 986.9,1575.0 1006.0,1571.8 1025.1,1575.0 1044.1,1571.8 1063.2,1571.8 1082.2,1575.0 1101.3,1575.0 1120.3,1571.8 1139.4,1575.0 1158.5,1571.8 1177.5,1575.0 1196.6,1575.0 1215.6,1573.7 1234.7,1573.7 1253.7,1575.0 1272.8,1575.0" stroke="#b877d9" stroke-width="1.5"/><polyline points="129.4,1575.0 148.5,1570.5 167.5,1573.2 186.6,1575.0 205.6,1575.0 224.7,1575.0 243.7,1575.0 262.8,1573.2 281.9,1575.0 300.9,1575.0 320.0,1575.0 339.0,1575.0 358.1,1573.2 377.1,1575.0 396.2,1573.2 415.2,1575.0 434.3,1575.0 453.4,1575.0 472.4,1575.0 491.5,1570.5 510.5,1573.2 529.6,1575.0 548.6,1570.5 567.7,1575.0 586.8,1575.0 605.8,1570.5 624.9,1573.2 643.9,1575.0 663.0,1570.5 682.0,1575.0 701.1,1575.0 720.2,1573.2 739.2,1575.0 758.3,1575.0 777.3,1575.0 796.4,1575.0 815.4,1575.0 834.5,1575.0 853.6,1573.2 872.6,1575.0 891.7,1575.0 910.7,1570.5 929.8,1575.0 948.8,1575.0 967.9,1570.5 986.9,1575.0 1006.0,1575.0 1025.1,1570.5 1044.1,1573.2 1063.2,1575.0 1082.2,1575.0 1101.3,1573.2 1120.3,1570.5 1139.4,1575.0 1158.5,1570.5 1177.5,1570.5 1196.6,1573.2 1215.6,1575.0 1234.7,1575.0 1253.7,1575.0 1272.8,1570.5" stroke="#6ED0E0" stroke-width="1.5"/><polyline points="129.4,1575.0 148.5,1573.8 167.5,1575.0 186.6,1572.0 205.6,1575.0 224.7,1575.0 243.7,1575.0 262.8,1573.8 281.9,1575.0 300.9,1575.0 320.0,1575.0 339.0,1572.0 358.1,1573.8 377.1,1575.0 396.2,1572.0 415.2,1575.0 434.3,1575.0 453.4,1575.0 472.4,1575.0 491.5,1575.0 510.5,1575.0 529.6,1575.0 548.6,1575.0 567.7,1575.0 586.8,1575.0 605.8,1572.0 624.9,1572.0 643.9,1573.8 663.0,1573.8 682.0,1575.0 701.1,1575.0 720.2,1575.0 739.2,1575.0 758.3,1572.0 777.3,1573.8 796.4,1572.0 815.4,1575.0 834.5,1573.8 853.6,1575.0 872.6,1573.8 891.7,1575.0 910.7,1572.0 929.8,1575.0 948.8,1575.0 967.9,1573.8 986.9,1572.0 1006.0,1573.8 1025.1,1573.8 1044.1,1573.8 1063.2,1572.0 1082.2,1575.0 1101.3,1573.8 1120.3,1572.0 1139.4,1572.0 1158.5,1575.0 1177.5,1573.8 1196.6,1572.0 1215.6,1575.0 1234.7,1573.8 1253.7,1575.0 1272.8,1575.0" stroke="#EF843C" stroke-width="1.5"/><polyline points="129.4,1573.8 148.5,1575.0 167.5,1573.8 186.6,1572.0 205.6,1572.0 224.7,1573.8 243.7,1575.0 262.8,1573.8 281.9,1575.0 300.9,1575.0 320.0,1572.0 339.0,1575.0 358.1,1573.8 377.1,1575.0 396.2,1573.8 415.2,1575.0 434.3,1575.0 453.4,1573.8 472.4,1575.0 491.5,1573.8 510.5,1572.0 529.6,1575.0 548.6,1575.0 567.7,1575.0 586.8,1573.8 605.8,1575.0 624.9,1575.0 643.9,1572.0 663.0,1573.8 682.0,1575.0 701.1,1572.0 720.2,1575.0 739.2,1573.8 758.3,1575.0 777.3,1575.0 796.4,1573.8 815.4,1572.0 834.5,1572.0 853.6,1575.0 872.6,1575.0 891.7,1575.0 910.7,1575.0 929.8,1575.0 948.8,1572.0 967.9,1572.0 986.9,1573.8 1006.0,1572.0 1025.1,1575.0 1044.1,1575.0 1063.2,1575.0 1082.2,1575.0 1101.3,1575.0 1120.3,1575.0 1139.4,1573.8 1158.5,1575.0 1177.5,1575.0 1196.6,1572.0 1215.6,1572.0 1234.7,1575.0 1253.7,1575.0 1272.8,1575.0" stroke="#f29191" stroke-width="1.5"/><polyline points="129.4,1572.8 148.5,1575.0 167.5,1574.1 186.6,1575.0 205.6,1575.0 224.7,1574.1 243.7,1575.0 262.8,1575.0 281.9,1575.0 300.9,1575.0 320.0,1572.8 339.0,1575.0 358.1,1575.0 377.1,1575.0 396.2,1574.1 415.2,1575.0 434.3,1574.1 453.4,1574.1 472.4,1574.1 491.5,1572.8 510.5,1574.1 529.6,1575.0 548.6,1575.0 567.7,1575.0 586.8,1575.0 605.8,1575.0 624.9,1574.1 643.9,1575.0 663.0,1575.0 682.0,1575.0 701.1,1574.1 720.2,1575.0 739.2,1574.1 758.3,1574.1 777.3,1575.0 796.4,1574.1 815.4,1572.8 834.5,1575.0 853.6,1572.8 872.6,1574.1 891.7,1575.0 910.7,1575.0 929.8,1574.1 948.8,1572.8 967.9,1575.0 986.9,1575.0 1006.0,1572.8 1025.1,1574.1 1044.1,1572.8 1063.2,1575.0 1082.2,1574.1 1101.3,1575.0 1120.3,1574.1 1139.4,1574.1 1158.5,1574.1 1177.5,1574.1 1196.6,1575.0 1215.6,1572.8 1234.7,1572.8 1253.7,1572.8 1272.8,1575.0" stroke="#e5ac0e" stroke-width="1.5"/><polyline points="129.4,1575.8 148.5,1575.8 167.5,1575.8 186.6,1575.8 205.6,1575.8 224.7,1575.8 243.7,1575.8 262.8,1575.8 281.9,1575.8 300.9,1575.8 320.0,1575.8 339.0,1575.8 358.1,1575.8 377.1,1575.8 396.2,1575.8 415.2,1575.8 434.3,1575.8 453.4,1575.8 472.4,1575.8 491.5,1575.8 510.5,1575.8 529.6,1575.8 548.6,1575.8 567.7,1575.8 586.8,1575.8 605.8,1575.8 624.9,1575.8 643.9,1575.8 663.0,1575.8 682.0,1575.8 701.1,1575.8 720.2,1575.8 739.2,1575.8 758.3,1575.8 777.3,1575.8 796.4,1575.8 815.4,1575.8 834.5,1575.8 853.6,1575.8 872.6,1575.8 891.7,1575.8 910.7,1575.8 929.8,1575.8 948.8,1575.8 967.9,1575.8 986.9,1575.8 1006.0,1575.8 1025.1,1575.8 1044.1,1575.8 1063.2,1575.8 1082.2,1575.8 1101.3,1570.3 1120.3,1570.3 1139.4,1575.8 1158.5,1575.8 1177.5,1575.8 1196.6,1575.8 1215.6,1575.8 1234.7,1575.8 1253.7,1575.8 1272.8,1575.8" stroke="#f4ece6" stroke-width="2.4"/></svg>
<span class="t" id="t74" style="top:1267.84px;font-size:21.6px;color:#33a2e5;letter-spacing:1.426px;-webkit-text-stroke:0.7px #33a2e5;right:68.57px;">current</span>
<div class="b" style="left:1314.4px;top:1317.8px;width:25.0px;height:7.2px;background:#7EB26D;border-radius:3.6px;"></div>
<span class="t" id="t75" style="top:1309.84px;font-size:21.6px;color:#ccccdc;letter-spacing:0.476px;-webkit-text-stroke:0.22px #ccccdc;left:1357.40px;">10.0.0.2:10250 container_status</span>
<div class="b" style="left:1310.8px;top:1343.5px;width:553.3px;height:47.2px;background:#22252b;"></div>
<div class="b" style="left:1314.4px;top:1365.2px;width:25.0px;height:7.2px;background:#EAB839;border-radius:3.6px;"></div>
<span class="t" id="t76" style="top:1356.84px;font-size:21.6px;color:#ccccdc;letter-spacing:0.456px;-webkit-text-stroke:0.22px #ccccdc;left:1357.40px;">10.0.0.2:10250 create_container</span>
<div class="b" style="left:1314.4px;top:1412.6px;width:25.0px;height:7.2px;background:#6ED0E0;border-radius:3.6px;"></div>
<span class="t" id="t77" style="top:1403.84px;font-size:21.6px;color:#ccccdc;letter-spacing:0.377px;-webkit-text-stroke:0.22px #ccccdc;left:1357.40px;">10.0.0.2:10250 image_status</span>
<span class="t" id="t78" style="top:1403.84px;font-size:21.6px;color:#ccccdc;letter-spacing:0.670px;-webkit-text-stroke:0.22px #ccccdc;right:54.83px;">4.95 ms</span>
<div class="b" style="left:1310.8px;top:1438.3px;width:553.3px;height:47.2px;background:#22252b;"></div>
<div class="b" style="left:1314.4px;top:1460.0px;width:25.0px;height:7.2px;background:#EF843C;border-radius:3.6px;"></div>
<span class="t" id="t79" style="top:1451.84px;font-size:21.6px;color:#ccccdc;letter-spacing:0.433px;-webkit-text-stroke:0.22px #ccccdc;left:1357.40px;">10.0.0.2:10250 list_containers</span>
<span class="t" id="t80" style="top:1451.84px;font-size:21.6px;color:#ccccdc;letter-spacing:0.670px;-webkit-text-stroke:0.22px #ccccdc;right:54.83px;">4.95 ms</span>
<div class="b" style="left:1314.4px;top:1507.4px;width:25.0px;height:7.2px;background:#E24D42;border-radius:3.6px;"></div>
<span class="t" id="t81" style="top:1498.84px;font-size:21.6px;color:#ccccdc;letter-spacing:0.357px;-webkit-text-stroke:0.22px #ccccdc;left:1357.40px;">10.0.0.2:10250 list_images</span>
<span class="t" id="t82" style="top:1498.84px;font-size:21.6px;color:#ccccdc;letter-spacing:0.670px;-webkit-text-stroke:0.22px #ccccdc;right:54.83px;">4.95 ms</span>
<div class="b" style="left:1310.8px;top:1533.1px;width:553.3px;height:47.2px;background:#22252b;"></div>
<div class="b" style="left:1314.4px;top:1554.8px;width:25.0px;height:7.2px;background:#1F78C1;border-radius:3.6px;"></div>
<span class="t" id="t83" style="top:1545.84px;font-size:21.6px;color:#ccccdc;letter-spacing:0.488px;-webkit-text-stroke:0.22px #ccccdc;left:1357.40px;">10.0.0.2:10250 list_podsandbox</span>
<span class="t" id="t84" style="top:1545.84px;font-size:21.6px;color:#ccccdc;letter-spacing:0.670px;-webkit-text-stroke:0.22px #ccccdc;right:54.83px;">4.95 ms</span>
<div class="b" style="left:1314.4px;top:1602.2px;width:25.0px;height:7.2px;background:#BA43A9;border-radius:3.6px;"></div>
<span class="t" id="t85" style="top:1593.84px;font-size:21.6px;color:#ccccdc;letter-spacing:0.488px;-webkit-text-stroke:0.22px #ccccdc;left:1357.40px;">10.0.0.2:10250 podsandbox_status</span>
<div class="b" style="left:28.0px;top:1648.0px;width:923.0px;height:456.0px;background:#1a1c20;border:1px solid #26282e;border-radius:4px;"></div>
<span class="t" id="t86" style="top:1664.96px;font-size:25px;color:#ccccdc;letter-spacing:0.758px;-webkit-text-stroke:0.45px #ccccdc;left:44.20px;">Pod Start Rate</span>
<span class="t" id="t87" style="top:1728.17px;font-size:21.2px;color:#c4c4d4;letter-spacing:0.713px;-webkit-text-stroke:0.22px #c4c4d4;right:1750.89px;">0.500 ops/s</span>
<span class="t" id="t88" style="top:1789.17px;font-size:21.2px;color:#c4c4d4;letter-spacing:0.822px;-webkit-text-stroke:0.22px #c4c4d4;right:1750.78px;">0.400 ops/s</span>
<span class="t" id="t89" style="top:1850.17px;font-size:21.2px;color:#c4c4d4;letter-spacing:0.822px;-webkit-text-stroke:0.22px #c4c4d4;right:1750.78px;">0.300 ops/s</span>
<span class="t" id="t90" style="top:1912.17px;font-size:21.2px;color:#c4c4d4;letter-spacing:0.822px;-webkit-text-stroke:0.22px #c4c4d4;right:1750.78px;">0.200 ops/s</span>
<span class="t" id="t91" style="top:1973.17px;font-size:21.2px;color:#c4c4d4;letter-spacing:0.331px;-webkit-text-stroke:0.22px #c4c4d4;right:1751.27px;">0.100 ops/s</span>
<span class="t" id="t92" style="top:2035.17px;font-size:21.2px;color:#c4c4d4;letter-spacing:0.670px;-webkit-text-stroke:0.22px #c4c4d4;right:1750.93px;">0 ops/s</span>
<span class="t" id="t93" style="top:2063.17px;font-size:21.2px;color:#c4c4d4;letter-spacing:0.294px;-webkit-text-stroke:0.22px #c4c4d4;left:210.35px;transform:translateX(-50%);">14:30</span>
<span class="t" id="t94" style="top:2063.17px;font-size:21.2px;color:#c4c4d4;letter-spacing:0.294px;-webkit-text-stroke:0.22px #c4c4d4;left:346.65px;transform:translateX(-50%);">15:00</span>
<svg class="b" style="left:0;top:0" width="1916" height="2091" viewBox="0 0 1916 2091" fill="none" stroke-linejoin="round"><g stroke="#3e3f44" stroke-width="1.6" fill="none"><line x1="173.8" x2="446.5" y1="1738.2" y2="1738.2"/><line x1="173.8" x2="446.5" y1="1799.65" y2="1799.65"/><line x1="173.8" x2="446.5" y1="1861.1000000000001" y2="1861.1000000000001"/><line x1="173.8" x2="446.5" y1="1922.5500000000002" y2="1922.5500000000002"/><line x1="173.8" x2="446.5" y1="1984.0" y2="1984.0"/><line x1="173.8" x2="446.5" y1="2045.45" y2="2045.45"/><line x1="210.2" x2="210.2" y1="1738.2" y2="2045.45"/><line x1="346.5" x2="346.5" y1="1738.2" y2="2045.45"/></g><polygon points="173.8,1802.4 178.3,1764.8 182.9,1788.1 187.4,1813.1 192.0,1785.8 196.5,1820.3 201.1,1820.3 205.6,1798.9 210.2,1792.4 214.7,1806.0 219.2,1799.6 223.8,1792.4 228.3,1813.1 232.9,1813.1 237.4,1813.1 242.0,1813.1 246.5,1819.8 251.1,1806.0 255.6,1792.4 260.2,1792.4 264.7,1819.8 269.2,1813.1 273.8,1826.7 278.3,1799.6 282.9,1806.0 287.4,1813.1 292.0,1792.4 296.5,1833.9 301.1,1792.4 305.6,1799.6 310.1,1819.8 314.7,1819.8 319.2,1792.4 323.8,1819.8 328.3,1819.8 332.9,1833.9 337.4,1826.7 342.0,1785.8 346.5,1764.8 351.1,1806.0 355.6,1833.9 360.1,1806.0 364.7,1819.8 369.2,1792.4 373.8,1778.6 378.3,1819.8 382.9,1813.1 387.4,1813.1 392.0,1785.8 396.5,1806.0 401.1,1819.8 405.6,1813.1 410.1,1813.1 414.7,1813.1 419.2,1826.7 423.8,1799.6 428.3,1819.8 432.9,1799.6 437.4,1813.1 442.0,1826.7 446.5,1813.1 446.5,2045.45 173.8,2045.45" fill="#E24D42" fill-opacity="0.10"/><polygon points="173.8,1909.6 178.3,1922.7 182.9,1895.3 187.4,1922.7 192.0,1881.8 196.5,1915.6 201.1,1895.3 205.6,1915.6 210.2,1929.9 214.7,1922.7 219.2,1909.1 223.8,1909.1 228.3,1915.6 232.9,1915.6 237.4,1909.1 242.0,1909.1 246.5,1902.5 251.1,1895.3 255.6,1902.5 260.2,1922.7 264.7,1902.5 269.2,1895.3 273.8,1915.6 278.3,1915.6 282.9,1909.1 287.4,1895.3 292.0,1888.7 296.5,1888.7 301.1,1902.0 305.6,1902.0 310.1,1902.0 314.7,1902.0 319.2,1888.7 323.8,1915.6 328.3,1895.3 332.9,1909.1 337.4,1902.5 342.0,1909.1 346.5,1929.9 351.1,1909.1 355.6,1902.5 360.1,1909.1 364.7,1895.3 369.2,1909.1 373.8,1902.5 378.3,1902.5 382.9,1915.6 387.4,1902.5 392.0,1915.6 396.5,1915.6 401.1,1915.6 405.6,1902.5 410.1,1922.7 414.7,1902.5 419.2,1915.6 423.8,1902.0 428.3,1902.0 432.9,1902.0 437.4,1909.1 442.0,1902.0 446.5,1902.0 446.5,2045.45 173.8,2045.45" fill="#1F78C1" fill-opacity="0.10"/><polygon points="173.8,1965.6 178.3,1983.5 182.9,1997.8 187.4,1991.1 192.0,1997.8 196.5,1977.5 201.1,1977.5 205.6,1991.1 210.2,1991.1 214.7,1991.1 219.2,1991.1 223.8,1991.1 228.3,1991.1 232.9,1997.8 237.4,1977.5 242.0,1984.7 246.5,1997.8 251.1,1984.7 255.6,1984.7 260.2,1984.7 264.7,1991.1 269.2,1991.1 273.8,1997.8 278.3,1977.5 282.9,1984.7 287.4,1997.8 292.0,1984.7 296.5,1997.8 301.1,1991.1 305.6,1984.7 310.1,1977.5 314.7,1984.7 319.2,1997.8 323.8,1997.8 328.3,1991.1 332.9,1984.7 337.4,1984.7 342.0,1991.1 346.5,1977.5 351.1,1991.1 355.6,1991.1 360.1,1984.7 364.7,1997.8 369.2,1984.7 373.8,1991.1 378.3,1984.7 382.9,1984.7 387.4,1984.7 392.0,1991.1 396.5,1991.1 401.1,1991.1 405.6,1984.7 410.1,1984.7 414.7,1991.1 419.2,1997.8 423.8,1984.7 428.3,1984.7 432.9,1984.7 437.4,1991.1 442.0,1991.1 446.5,1991.1 446.5,2045.45 173.8,2045.45" fill="#EF843C" fill-opacity="0.10"/><g stroke="#d8c8c8" stroke-opacity="0.12" stroke-width="1.4"><line x1="210.2" x2="210.2" y1="1800" y2="2045.45"/><line x1="346.5" x2="346.5" y1="1765" y2="2045.45"/><line x1="173.8" x2="446.5" y1="1861.1000000000001" y2="1861.1000000000001"/><line x1="173.8" x2="446.5" y1="1922.5500000000002" y2="1922.5500000000002"/><line x1="173.8" x2="446.5" y1="1984.0" y2="1984.0"/></g><polyline points="173.8,1802.4 178.3,1764.8 182.9,1788.1 187.4,1813.1 192.0,1785.8 196.5,1820.3 201.1,1820.3 205.6,1798.9 210.2,1792.4 214.7,1806.0 219.2,1799.6 223.8,1792.4 228.3,1813.1 232.9,1813.1 237.4,1813.1 242.0,1813.1 246.5,1819.8 251.1,1806.0 255.6,1792.4 260.2,1792.4 264.7,1819.8 269.2,1813.1 273.8,1826.7 278.3,1799.6 282.9,1806.0 287.4,1813.1 292.0,1792.4 296.5,1833.9 301.1,1792.4 305.6,1799.6 310.1,1819.8 314.7,1819.8 319.2,1792.4 323.8,1819.8 328.3,1819.8 332.9,1833.9 337.4,1826.7 342.0,1785.8 346.5,1764.8 351.1,1806.0 355.6,1833.9 360.1,1806.0 364.7,1819.8 369.2,1792.4 373.8,1778.6 378.3,1819.8 382.9,1813.1 387.4,1813.1 392.0,1785.8 396.5,1806.0 401.1,1819.8 405.6,1813.1 410.1,1813.1 414.7,1813.1 419.2,1826.7 423.8,1799.6 428.3,1819.8 432.9,1799.6 437.4,1813.1 442.0,1826.7 446.5,1813.1" stroke="#e0503f" stroke-width="1.8"/><polyline points="173.8,1909.6 178.3,1922.7 182.9,1895.3 187.4,1922.7 192.0,1881.8 196.5,1915.6 201.1,1895.3 205.6,1915.6 210.2,1929.9 214.7,1922.7 219.2,1909.1 223.8,1909.1 228.3,1915.6 232.9,1915.6 237.4,1909.1 242.0,1909.1 246.5,1902.5 251.1,1895.3 255.6,1902.5 260.2,1922.7 264.7,1902.5 269.2,1895.3 273.8,1915.6 278.3,1915.6 282.9,1909.1 287.4,1895.3 292.0,1888.7 296.5,1888.7 301.1,1902.0 305.6,1902.0 310.1,1902.0 314.7,1902.0 319.2,1888.7 323.8,1915.6 328.3,1895.3 332.9,1909.1 337.4,1902.5 342.0,1909.1 346.5,1929.9 351.1,1909.1 355.6,1902.5 360.1,1909.1 364.7,1895.3 369.2,1909.1 373.8,1902.5 378.3,1902.5 382.9,1915.6 387.4,1902.5 392.0,1915.6 396.5,1915.6 401.1,1915.6 405.6,1902.5 410.1,1922.7 414.7,1902.5 419.2,1915.6 423.8,1902.0 428.3,1902.0 432.9,1902.0 437.4,1909.1 442.0,1902.0 446.5,1902.0" stroke="#2a80c8" stroke-width="1.8"/><polyline points="173.8,1965.6 178.3,1983.5 182.9,1997.8 187.4,1991.1 192.0,1997.8 196.5,1977.5 201.1,1977.5 205.6,1991.1 210.2,1991.1 214.7,1991.1 219.2,1991.1 223.8,1991.1 228.3,1991.1 232.9,1997.8 237.4,1977.5 242.0,1984.7 246.5,1997.8 251.1,1984.7 255.6,1984.7 260.2,1984.7 264.7,1991.1 269.2,1991.1 273.8,1997.8 278.3,1977.5 282.9,1984.7 287.4,1997.8 292.0,1984.7 296.5,1997.8 301.1,1991.1 305.6,1984.7 310.1,1977.5 314.7,1984.7 319.2,1997.8 323.8,1997.8 328.3,1991.1 332.9,1984.7 337.4,1984.7 342.0,1991.1 346.5,1977.5 351.1,1991.1 355.6,1991.1 360.1,1984.7 364.7,1997.8 369.2,1984.7 373.8,1991.1 378.3,1984.7 382.9,1984.7 387.4,1984.7 392.0,1991.1 396.5,1991.1 401.1,1991.1 405.6,1984.7 410.1,1984.7 414.7,1991.1 419.2,1997.8 423.8,1984.7 428.3,1984.7 432.9,1984.7 437.4,1991.1 442.0,1991.1 446.5,1991.1" stroke="#ea8a48" stroke-width="1.8"/><polyline points="173.8,2045.45 178.3,2032.45 186.4,2045.45" stroke="#d8aa30" stroke-width="1.8"/><line x1="173.8" x2="446.5" y1="2045.45" y2="2045.45" stroke="#7ad6d2" stroke-width="2"/></svg>
<span class="t" id="t95" style="top:1736.84px;font-size:21.6px;color:#33a2e5;letter-spacing:1.426px;-webkit-text-stroke:0.7px #33a2e5;right:1005.77px;">current</span>
<div class="b" style="left:487.8px;top:1787.0px;width:25.0px;height:7.2px;background:#7EB26D;border-radius:3.6px;"></div>
<span class="t" id="t96" style="top:1778.84px;font-size:21.6px;color:#ccccdc;letter-spacing:0.376px;-webkit-text-stroke:0.22px #ccccdc;left:530.60px;">10.0.0.2:10250 pod</span>
<span class="t" id="t97" style="top:1778.84px;font-size:21.6px;color:#ccccdc;letter-spacing:0.811px;-webkit-text-stroke:0.22px #ccccdc;right:991.89px;">0 ops/s</span>
<div class="b" style="left:485.0px;top:1812.7px;width:441.9px;height:47.2px;background:#22252b;"></div>
<div class="b" style="left:487.8px;top:1834.4px;width:25.0px;height:7.2px;background:#EAB839;border-radius:3.6px;"></div>
<span class="t" id="t98" style="top:1825.84px;font-size:21.6px;color:#ccccdc;letter-spacing:-0.140px;-webkit-text-stroke:0.22px #ccccdc;left:530.60px;">10.0.1.1:10250 pod</span>
<span class="t" id="t99" style="top:1825.84px;font-size:21.6px;color:#ccccdc;letter-spacing:0.811px;-webkit-text-stroke:0.22px #ccccdc;right:991.89px;">0 ops/s</span>
<div class="b" style="left:487.8px;top:1881.8px;width:25.0px;height:7.2px;background:#6ED0E0;border-radius:3.6px;"></div>
<span class="t" id="t100" style="top:1873.84px;font-size:21.6px;color:#ccccdc;letter-spacing:0.149px;-webkit-text-stroke:0.22px #ccccdc;left:530.60px;">10.0.2.1:10250 pod</span>
<span class="t" id="t101" style="top:1873.84px;font-size:21.6px;color:#ccccdc;letter-spacing:0.811px;-webkit-text-stroke:0.22px #ccccdc;right:991.89px;">0 ops/s</span>
<div class="b" style="left:485.0px;top:1907.5px;width:441.9px;height:47.2px;background:#22252b;"></div>
<div class="b" style="left:487.8px;top:1929.2px;width:25.0px;height:7.2px;background:#EF843C;border-radius:3.6px;"></div>
<span class="t" id="t102" style="top:1920.84px;font-size:21.6px;color:#ccccdc;letter-spacing:0.439px;-webkit-text-stroke:0.22px #ccccdc;left:530.60px;">10.0.0.2:10250 worker</span>
<span class="t" id="t103" style="top:1920.84px;font-size:21.6px;color:#ccccdc;letter-spacing:0.894px;-webkit-text-stroke:0.22px #ccccdc;right:991.81px;">0.0889 ops/s</span>
<div class="b" style="left:487.8px;top:1976.6px;width:25.0px;height:7.2px;background:#E24D42;border-radius:3.6px;"></div>
<span class="t" id="t104" style="top:1967.84px;font-size:21.6px;color:#ccccdc;letter-spacing:-0.033px;-webkit-text-stroke:0.22px #ccccdc;left:530.60px;">10.0.1.1:10250 worker</span>
<span class="t" id="t105" style="top:1967.84px;font-size:21.6px;color:#ccccdc;letter-spacing:0.749px;-webkit-text-stroke:0.22px #ccccdc;right:991.95px;">0.378 ops/s</span>
<div class="b" style="left:485.0px;top:2002.3px;width:441.9px;height:47.2px;background:#22252b;"></div>
<div class="b" style="left:487.8px;top:2024.0px;width:25.0px;height:7.2px;background:#1F78C1;border-radius:3.6px;"></div>
<span class="t" id="t106" style="top:2015.84px;font-size:21.6px;color:#ccccdc;letter-spacing:0.239px;-webkit-text-stroke:0.22px #ccccdc;left:530.60px;">10.0.2.1:10250 worker</span>
<span class="t" id="t107" style="top:2015.84px;font-size:21.6px;color:#ccccdc;letter-spacing:0.940px;-webkit-text-stroke:0.22px #ccccdc;right:991.76px;">0.233 ops/s</span>
<div class="b" style="left:965.0px;top:1648.0px;width:923.0px;height:456.0px;background:#1a1c20;border:1px solid #26282e;border-radius:4px;"></div>
<span class="t" id="t108" style="top:1664.96px;font-size:25px;color:#ccccdc;letter-spacing:0.940px;-webkit-text-stroke:0.45px #ccccdc;left:981.20px;">Pod Start Duration</span>
<span class="t" id="t109" style="top:1728.17px;font-size:21.2px;color:#c4c4d4;letter-spacing:0.111px;-webkit-text-stroke:0.22px #c4c4d4;right:859.69px;">3 s</span>
<span class="t" id="t110" style="top:1779.17px;font-size:21.2px;color:#c4c4d4;letter-spacing:0.347px;-webkit-text-stroke:0.22px #c4c4d4;right:859.45px;">2.50 s</span>
<span class="t" id="t111" style="top:1830.17px;font-size:21.2px;color:#c4c4d4;letter-spacing:-0.089px;-webkit-text-stroke:0.22px #c4c4d4;right:859.89px;">2 s</span>
<span class="t" id="t112" style="top:1881.17px;font-size:21.2px;color:#c4c4d4;letter-spacing:-0.303px;-webkit-text-stroke:0.22px #c4c4d4;right:860.10px;">1.50 s</span>
<span class="t" id="t113" style="top:1932.17px;font-size:21.2px;color:#c4c4d4;letter-spacing:-0.755px;-webkit-text-stroke:0.22px #c4c4d4;right:860.56px;">1 s</span>
<span class="t" id="t114" style="top:1983.17px;font-size:21.2px;color:#c4c4d4;letter-spacing:0.519px;-webkit-text-stroke:0.22px #c4c4d4;right:859.28px;">500 ms</span>
<span class="t" id="t115" style="top:2034.17px;font-size:21.2px;color:#c4c4d4;letter-spacing:0.278px;-webkit-text-stroke:0.22px #c4c4d4;right:859.52px;">0 s</span>
<span class="t" id="t116" style="top:2063.17px;font-size:21.2px;color:#c4c4d4;letter-spacing:0.294px;-webkit-text-stroke:0.22px #c4c4d4;left:1115.35px;transform:translateX(-50%);">14:30</span>
<span class="t" id="t117" style="top:2063.17px;font-size:21.2px;color:#c4c4d4;letter-spacing:0.294px;-webkit-text-stroke:0.22px #c4c4d4;left:1300.95px;transform:translateX(-50%);">15:00</span>
<svg class="b" style="left:0;top:0" width="1916" height="2091" viewBox="0 0 1916 2091" fill="none" stroke-linejoin="round"><g stroke="#3e3f44" stroke-width="1.6" fill="none"><line x1="1066.4" x2="1436.7" y1="1738.5" y2="1738.5"/><line x1="1066.4" x2="1436.7" y1="1789.6" y2="1789.6"/><line x1="1066.4" x2="1436.7" y1="1840.7" y2="1840.7"/><line x1="1066.4" x2="1436.7" y1="1891.8" y2="1891.8"/><line x1="1066.4" x2="1436.7" y1="1942.9" y2="1942.9"/><line x1="1066.4" x2="1436.7" y1="1994.0" y2="1994.0"/><line x1="1066.4" x2="1436.7" y1="2045.1" y2="2045.1"/><line x1="1115.2" x2="1115.2" y1="1738.5" y2="2045.1"/><line x1="1300.8" x2="1300.8" y1="1738.5" y2="2045.1"/></g><polygon points="1066.4,2026.1 1072.1,1801.9 1078.8,1800.8 1085.1,2043.6 1085.1,2045.1 1066.4,2045.1" fill="#7a4a26" fill-opacity="0.30"/><rect x="1072.1" y="1791" width="6.6" height="254.0999999999999" fill="#EAB839" fill-opacity="0.08"/><polyline points="1066.4,2026.1 1072.1,1801.9 1078.8,1800.8 1085.1,2043.6 1094.9,2043.8 1100.1,2043.6 1105.3,2041.7 1110.5,2041.7 1117.0,2043.8 1232.7,2043.8 1237.9,2041.0 1249.6,2041.0 1256.1,2043.8 1318.4,2043.6 1324.9,2041.5 1331.4,2043.8 1412.0,2043.8 1418.5,2041.7 1423.7,2041.7 1430.2,2044.3 1436.7,2044.3" stroke="#dd5548" stroke-width="1.6"/><line x1="1072.1" y1="1791.7" x2="1078.6" y2="1790.4" stroke="#e8c83a" stroke-width="1.8"/><line x1="1066.4" x2="1436.7" y1="2045.3999999999999" y2="2045.3999999999999" stroke="#3a86c8" stroke-width="2.2"/></svg>
<span class="t" id="t118" style="top:1736.84px;font-size:21.6px;color:#33a2e5;letter-spacing:1.426px;-webkit-text-stroke:0.7px #33a2e5;right:68.57px;">current</span>
<div class="b" style="left:1477.8px;top:1787.0px;width:25.0px;height:7.2px;background:#7EB26D;border-radius:3.6px;"></div>
<span class="t" id="t119" style="top:1778.84px;font-size:21.6px;color:#ccccdc;letter-spacing:0.376px;-webkit-text-stroke:0.22px #ccccdc;left:1521.80px;">10.0.0.2:10250 pod</span>
<div class="b" style="left:1475.0px;top:1812.7px;width:389.1px;height:47.2px;background:#22252b;"></div>
<div class="b" style="left:1477.8px;top:1834.4px;width:25.0px;height:7.2px;background:#EAB839;border-radius:3.6px;"></div>
<span class="t" id="t120" style="top:1825.84px;font-size:21.6px;color:#ccccdc;letter-spacing:-0.140px;-webkit-text-stroke:0.22px #ccccdc;left:1521.80px;">10.0.1.1:10250 pod</span>
<div class="b" style="left:1477.8px;top:1881.8px;width:25.0px;height:7.2px;background:#6ED0E0;border-radius:3.6px;"></div>
<span class="t" id="t121" style="top:1873.84px;font-size:21.6px;color:#ccccdc;letter-spacing:0.149px;-webkit-text-stroke:0.22px #ccccdc;left:1521.80px;">10.0.2.1:10250 pod</span>
<div class="b" style="left:1475.0px;top:1907.5px;width:389.1px;height:47.2px;background:#22252b;"></div>
<div class="b" style="left:1477.8px;top:1929.2px;width:25.0px;height:7.2px;background:#EF843C;border-radius:3.6px;"></div>
<span class="t" id="t122" style="top:1920.84px;font-size:21.6px;color:#ccccdc;letter-spacing:0.439px;-webkit-text-stroke:0.22px #ccccdc;left:1521.80px;">10.0.0.2:10250 worker</span>
<span class="t" id="t123" style="top:1920.84px;font-size:21.6px;color:#ccccdc;letter-spacing:0.670px;-webkit-text-stroke:0.22px #ccccdc;right:54.83px;">9.60 ms</span>
<div class="b" style="left:1477.8px;top:1976.6px;width:25.0px;height:7.2px;background:#E24D42;border-radius:3.6px;"></div>
<span class="t" id="t124" style="top:1967.84px;font-size:21.6px;color:#ccccdc;letter-spacing:-0.033px;-webkit-text-stroke:0.22px #ccccdc;left:1521.80px;">10.0.1.1:10250 worker</span>
<span class="t" id="t125" style="top:1967.84px;font-size:21.6px;color:#ccccdc;letter-spacing:0.298px;-webkit-text-stroke:0.22px #ccccdc;right:55.20px;">19.9 ms</span>
<div class="b" style="left:1475.0px;top:2002.3px;width:389.1px;height:47.2px;background:#22252b;"></div>
<div class="b" style="left:1477.8px;top:2024.0px;width:25.0px;height:7.2px;background:#1F78C1;border-radius:3.6px;"></div>
<span class="t" id="t126" style="top:2015.84px;font-size:21.6px;color:#ccccdc;letter-spacing:0.239px;-webkit-text-stroke:0.22px #ccccdc;left:1521.80px;">10.0.2.1:10250 worker</span>
<span class="t" id="t127" style="top:2015.84px;font-size:21.6px;color:#ccccdc;letter-spacing:0.670px;-webkit-text-stroke:0.22px #ccccdc;right:54.83px;">4.95 ms</span>
</div>
</body></html>
